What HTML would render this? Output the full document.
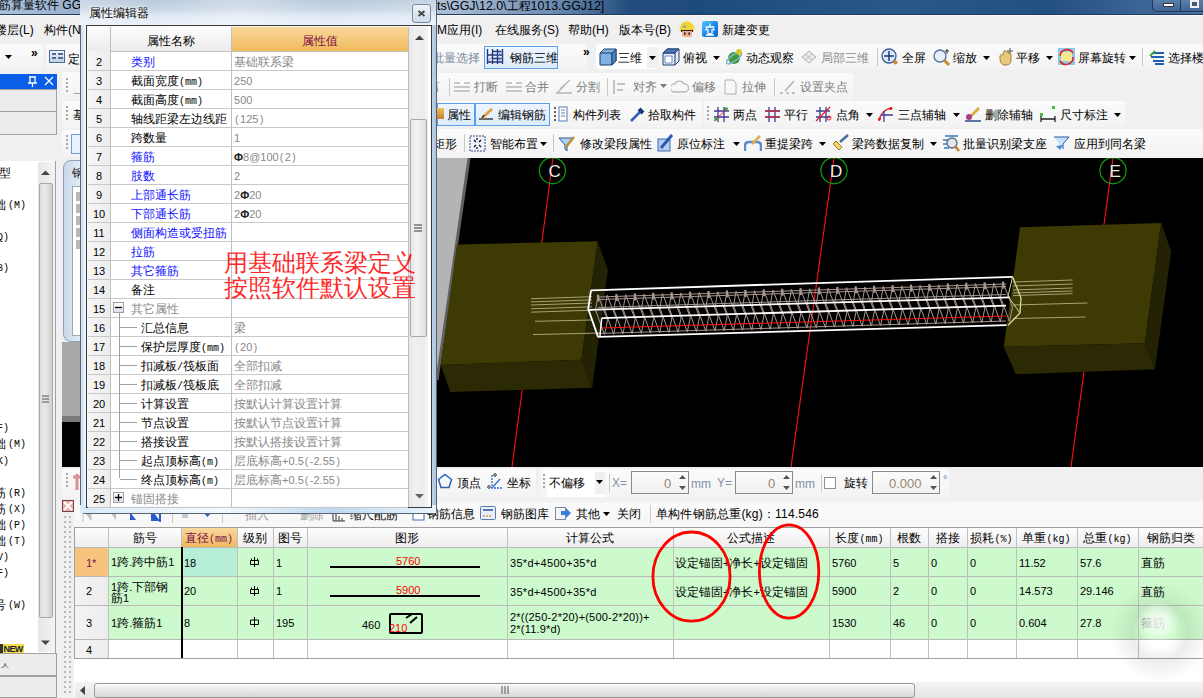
<!DOCTYPE html><html><head><meta charset="utf-8"><style>
html,body{margin:0;padding:0}
body{width:1203px;height:698px;overflow:hidden;position:relative;background:#f0f0f0;font-family:'Liberation Sans',sans-serif}
div,span,svg{position:absolute;box-sizing:border-box}
span{white-space:nowrap}
</style></head><body>
<div style="left:0px;top:0px;width:1203px;height:15px;background:linear-gradient(90deg,#aac0da 0px,#9db4d0 60px,#5d82ad 330px,#27507f 520px,#1f4a7c 700px,#2b5889 900px,#24507f 1050px,#3a6493 1140px,#4a729e 1203px)"></div>
<div style="left:430px;top:0px;width:200px;height:15px;background:linear-gradient(90deg,rgba(190,205,225,0.9),rgba(160,185,215,0.6) 60%,rgba(60,100,150,0))"></div>
<div style="left:0px;top:14px;width:1203px;height:1.5px;background:#203b5e"></div>
<span style="left:-1px;top:-1.0px;font-size:12px;line-height:12px;color:#000;font-family:'Liberation Sans',sans-serif;">筋算量软件 GG</span>
<span style="left:437px;top:0.3px;font-size:12.4px;line-height:12.4px;color:#000;font-family:'Liberation Sans',sans-serif;">ts\GGJ\12.0\工程1013.GGJ12]</span>
<div style="left:1152px;top:-3px;width:29px;height:15px;border:1px solid #223a5a;border-radius:0 0 0 4px;background:linear-gradient(#5f84ad,#3d6594)"></div>
<div style="left:1163px;top:3px;width:11px;height:4px;background:#fff;border:1px solid #334"></div>
<div style="left:1180px;top:-3px;width:30px;height:15px;border:1px solid #223a5a;background:linear-gradient(#5f84ad,#3d6594)"></div>
<div style="left:1190px;top:0px;width:9px;height:8px;border:2px solid #eee;background:#44596f"></div>
<div style="left:0px;top:15px;width:1203px;height:28px;background:#f0f0f0"></div>
<div style="left:0px;top:15px;width:1203px;height:1px;background:#fafafa"></div>
<span style="left:-5px;top:24.0px;font-size:12px;line-height:12px;color:#000;font-family:'Liberation Sans',sans-serif;">楼层(L)</span>
<span style="left:44px;top:24.0px;font-size:12px;line-height:12px;color:#000;font-family:'Liberation Sans',sans-serif;">构件(N)</span>
<span style="left:437px;top:24.0px;font-size:12px;line-height:12px;color:#000;font-family:'Liberation Sans',sans-serif;">M应用(I)</span>
<span style="left:495px;top:24.0px;font-size:12px;line-height:12px;color:#000;font-family:'Liberation Sans',sans-serif;">在线服务(S)</span>
<span style="left:568px;top:24.0px;font-size:12px;line-height:12px;color:#000;font-family:'Liberation Sans',sans-serif;">帮助(H)</span>
<span style="left:619px;top:24.0px;font-size:12px;line-height:12px;color:#000;font-family:'Liberation Sans',sans-serif;">版本号(B)</span>
<span style="left:722px;top:24.0px;font-size:12px;line-height:12px;color:#000;font-family:'Liberation Sans',sans-serif;">新建变更</span>
<svg style="left:679px;top:21px" width="16" height="16"><path d="M0.5 10Q0.5 0.5 8 0.5Q15.5 0.5 15.5 10z" fill="#f2d235"/><path d="M2 9h12v2H2z" fill="#2a1e18"/><path d="M3 10h10v3.5q0 2.5-2.5 2.5h-5q-2.5 0-2.5-2.5z" fill="#eab08e"/><rect x="5" y="11.5" width="1.6" height="2.2" fill="#222"/><rect x="9.4" y="11.5" width="1.6" height="2.2" fill="#222"/><circle cx="5.5" cy="5.5" r="1.3" fill="#5aa0e0"/></svg>
<svg style="left:702px;top:21px" width="16" height="16"><defs><linearGradient id="bg1" x1="0" y1="0" x2="1" y2="1"><stop offset="0" stop-color="#5cc8ff"/><stop offset="0.5" stop-color="#1a8ae8"/><stop offset="1" stop-color="#0a6ad0"/></linearGradient></defs><rect x="0" y="0" width="16" height="16" rx="2" fill="url(#bg1)"/><path d="M8 2.5v3M3.5 6h9M5 7.5l-1.5 2M11 7.5l1.5 2M6 8v3M10 8v3M4 14h8M5 11.5l6 2.5M11 11.5l-6 2.5" stroke="#fff" stroke-width="1.3" fill="none"/></svg>
<div style="left:0px;top:43px;width:1203px;height:114px;background:#f0f0f0"></div>
<div style="left:0px;top:44px;width:43px;height:25px;background:linear-gradient(#fbfbfb,#f3f3f3);border-radius:3px;"></div>
<svg style="left:5px;top:55px" width="7" height="4"><path d="M0 0h7L3.5 4z" fill="#000"/></svg>
<span style="left:31px;top:46.8px;font-size:12px;line-height:12px;color:#000;font-family:'Liberation Sans',sans-serif;font-weight:bold">»</span>
<div style="left:46px;top:44px;width:40px;height:25px;background:linear-gradient(#fbfbfb,#f3f3f3);border-radius:3px;"></div>
<div style="left:49px;top:50px;width:16px;height:13px;border:1px solid #4a6a9a;background:linear-gradient(#f0f4fa,#c0d0e6)"></div>
<div style="left:52px;top:53px;width:4px;height:2px;background:#4a6a9a"></div>
<div style="left:58px;top:53px;width:5px;height:2px;background:#4a6a9a"></div>
<div style="left:52px;top:57px;width:4px;height:2px;background:#4a6a9a"></div>
<div style="left:58px;top:57px;width:5px;height:2px;background:#4a6a9a"></div>
<span style="left:68px;top:52.5px;font-size:12px;line-height:12px;color:#000;font-family:'Liberation Sans',sans-serif;">定</span>
<div style="left:62px;top:72px;width:30px;height:28px;background:linear-gradient(#fbfbfb,#f3f3f3);border-radius:3px;"></div>
<div style="left:66px;top:78px;width:2px;height:2px;background:#a8a8a8"></div>
<div style="left:66px;top:82px;width:2px;height:2px;background:#a8a8a8"></div>
<div style="left:66px;top:86px;width:2px;height:2px;background:#a8a8a8"></div>
<div style="left:66px;top:90px;width:2px;height:2px;background:#a8a8a8"></div>
<div style="left:62px;top:101px;width:30px;height:27px;background:linear-gradient(#fbfbfb,#f3f3f3);border-radius:3px;"></div>
<div style="left:66px;top:106px;width:2px;height:2px;background:#a8a8a8"></div>
<div style="left:66px;top:110px;width:2px;height:2px;background:#a8a8a8"></div>
<div style="left:66px;top:114px;width:2px;height:2px;background:#a8a8a8"></div>
<div style="left:66px;top:118px;width:2px;height:2px;background:#a8a8a8"></div>
<div style="left:62px;top:130px;width:30px;height:27px;background:linear-gradient(#fbfbfb,#f3f3f3);border-radius:3px;"></div>
<div style="left:66px;top:135px;width:2px;height:2px;background:#a8a8a8"></div>
<div style="left:66px;top:139px;width:2px;height:2px;background:#a8a8a8"></div>
<div style="left:66px;top:143px;width:2px;height:2px;background:#a8a8a8"></div>
<div style="left:66px;top:147px;width:2px;height:2px;background:#a8a8a8"></div>
<span style="left:74px;top:81.1px;font-size:12px;line-height:12px;color:#999;font-family:'Liberation Sans',sans-serif;">_</span>
<span style="left:73px;top:108.5px;font-size:12px;line-height:12px;color:#000;font-family:'Liberation Sans',sans-serif;">基</span>
<div style="left:71px;top:134px;width:14px;height:20px;border:1px solid #6aa0e0;background:#e8f2fc"></div>
<div style="left:437px;top:44px;width:150px;height:25px;background:linear-gradient(#fbfbfb,#f3f3f3);border-radius:3px;"></div>
<span style="left:432px;top:52.3px;font-size:12px;line-height:12px;color:#7a8aa0;font-family:'Liberation Sans',sans-serif;">批量选择</span>
<div style="left:484px;top:46px;width:74px;height:23px;border:1px solid #5aa0e8;background:linear-gradient(#eef6fe,#dcecfc)"></div>
<svg style="left:486px;top:48px" width="19" height="17"><g stroke="#2a3a7a" stroke-width="1.4" fill="none"><path d="M1.5 1v15M6.5 1v15M11.5 1v15M16.5 1v15M1.5 7h15M1.5 14h15M6.5 3.5h10M6.5 10.5h10"/></g><path d="M2 13L6 9M12 7l4-4M12 13l4-3" stroke="#6a9ad0" stroke-width="1"/></svg>
<span style="left:510px;top:52.3px;font-size:12px;line-height:12px;color:#000;font-family:'Liberation Sans',sans-serif;">钢筋三维</span>
<span style="left:583px;top:46.1px;font-size:12px;line-height:12px;color:#000;font-family:'Liberation Sans',sans-serif;font-weight:bold">»</span>
<div style="left:596px;top:44px;width:62px;height:25px;background:linear-gradient(#fbfbfb,#f3f3f3);border-radius:3px;background:#fff"></div>
<svg style="left:599px;top:48px" width="18" height="18"><path d="M1 5l4-4h12v12l-4 4H1z" fill="#7fb2e0" stroke="#1e3f70"/><path d="M1 5h12v12M13 5l4-4" fill="none" stroke="#1e3f70"/><path d="M13 5l4-4v12l-4 4z" fill="#4a85c0" stroke="#1e3f70"/></svg>
<span style="left:618px;top:52.3px;font-size:12px;line-height:12px;color:#000;font-family:'Liberation Sans',sans-serif;">三维</span>
<div style="left:647px;top:47px;width:12px;height:21px;background:#f0f0f0"></div>
<svg style="left:649.3px;top:55.6px" width="7" height="4"><path d="M0 0h7L3.5 4z" fill="#000"/></svg>
<div style="left:658px;top:44px;width:545px;height:25px;background:linear-gradient(#fbfbfb,#f3f3f3);border-radius:3px;"></div>
<svg style="left:662px;top:48px" width="18" height="18"><path d="M1 5l4-4h12v12l-4 4H1z" fill="#e0ecf8" stroke="#1e3f70"/><path d="M1 5h12v12M13 5l4-4" fill="none" stroke="#1e3f70"/><path d="M5 1h12l-4 4H1z" fill="#4a78b0" stroke="#1e3f70"/><path d="M3 8h7v7H3z" fill="#fff" stroke="#7090c0"/></svg>
<span style="left:683px;top:52.3px;font-size:12px;line-height:12px;color:#000;font-family:'Liberation Sans',sans-serif;">俯视</span>
<svg style="left:713.2px;top:55.6px" width="7" height="4"><path d="M0 0h7L3.5 4z" fill="#000"/></svg>
<svg style="left:726px;top:48px" width="18" height="18"><ellipse cx="8" cy="10" rx="6" ry="6" fill="#3a9a3a"/><ellipse cx="8" cy="10" rx="9" ry="3" transform="rotate(-35 8 10)" fill="none" stroke="#8ab0d8" stroke-width="1.5"/><circle cx="13" cy="4" r="3" fill="#d8c830"/></svg>
<span style="left:746px;top:52.3px;font-size:12px;line-height:12px;color:#000;font-family:'Liberation Sans',sans-serif;">动态观察</span>
<svg style="left:800px;top:49px" width="18" height="16"><path d="M2 8l7-6 7 6-7 6z" fill="#e8e8e8" stroke="#b0b0b0"/><path d="M5 5l7 6M12 5l-7 6" stroke="#c0c0c0"/></svg>
<span style="left:821px;top:52.3px;font-size:12px;line-height:12px;color:#8a8a8a;font-family:'Liberation Sans',sans-serif;">局部三维</span>
<div style="left:877px;top:48px;width:1px;height:18px;background:#c8c8c8"></div>
<svg style="left:881px;top:48px" width="18" height="18"><circle cx="8" cy="8" r="7" fill="#dfe8f5" stroke="#3a5a90" stroke-width="1.3"/><path d="M8 3v10M3 8h10" stroke="#1a3a80" stroke-width="1.5"/><circle cx="14.5" cy="14.5" r="2" fill="#e08020"/></svg>
<span style="left:902px;top:52.3px;font-size:12px;line-height:12px;color:#000;font-family:'Liberation Sans',sans-serif;">全屏</span>
<svg style="left:933px;top:48px" width="18" height="18"><circle cx="7" cy="8" r="6" fill="#e6eef8" stroke="#5070a0" stroke-width="1.3"/><path d="M11 12l5 5" stroke="#c09030" stroke-width="3"/><path d="M14 1v5M12 3h4" stroke="#333"/></svg>
<span style="left:953px;top:52.3px;font-size:12px;line-height:12px;color:#000;font-family:'Liberation Sans',sans-serif;">缩放</span>
<svg style="left:983.3px;top:55.6px" width="7" height="4"><path d="M0 0h7L3.5 4z" fill="#000"/></svg>
<svg style="left:997px;top:48px" width="18" height="18"><path d="M3 9c0-3 2-3 3-2l1-4c1-1 2 0 2 1l1 0c1-1 2 0 2 1v1c1-1 2 0 2 1l0 6c0 2-2 4-5 4H7c-2 0-4-3-4-6z" fill="#e8c878" stroke="#a08040"/><path d="M13 0v6M10 3h6" stroke="#555"/></svg>
<span style="left:1016px;top:52.3px;font-size:12px;line-height:12px;color:#000;font-family:'Liberation Sans',sans-serif;">平移</span>
<svg style="left:1046.3px;top:55.6px" width="7" height="4"><path d="M0 0h7L3.5 4z" fill="#000"/></svg>
<svg style="left:1058px;top:48px" width="18" height="18"><rect x="0" y="0" width="17" height="17" fill="#8cc8e8"/><rect x="3" y="4" width="11" height="9" fill="#f8e890"/><path d="M2 8a7 7 0 0 1 13-3M15 9a7 7 0 0 1-13 4" fill="none" stroke="#e02020" stroke-width="1.5"/></svg>
<span style="left:1078px;top:52.3px;font-size:12px;line-height:12px;color:#000;font-family:'Liberation Sans',sans-serif;">屏幕旋转</span>
<svg style="left:1129.3px;top:55.6px" width="7" height="4"><path d="M0 0h7L3.5 4z" fill="#000"/></svg>
<div style="left:1142px;top:48px;width:1px;height:18px;background:#c8c8c8"></div>
<svg style="left:1149px;top:50px" width="16" height="15"><path d="M4 3h11M2 7h13M4 11h11M6 14h9" stroke="#2060b0" stroke-width="2"/><path d="M1 6l5-5" stroke="#40a040" stroke-width="2"/></svg>
<span style="left:1168px;top:52.3px;font-size:12px;line-height:12px;color:#000;font-family:'Liberation Sans',sans-serif;">选择楼</span>
<div style="left:437px;top:73px;width:416px;height:27px;background:linear-gradient(#fbfbfb,#f3f3f3);border-radius:3px;"></div>
<span style="left:428px;top:81.2px;font-size:12px;line-height:12px;color:#8a8a8a;font-family:'Liberation Sans',sans-serif;">菑</span>
<div style="left:449px;top:78px;width:1px;height:18px;background:#c8c8c8"></div>
<svg style="left:453px;top:80px" width="18" height="14"><path d="M1 3h6M11 3h6M1 7h16M1 11h16" stroke="#b8b8b8" stroke-width="1.3"/></svg>
<span style="left:474px;top:81.2px;font-size:12px;line-height:12px;color:#7a7a7a;font-family:'Liberation Sans',sans-serif;">打断</span>
<svg style="left:505px;top:80px" width="18" height="14"><path d="M1 3h6M11 3h6M1 7h16M1 11h16" stroke="#b8b8b8" stroke-width="1.3"/></svg>
<span style="left:525px;top:81.2px;font-size:12px;line-height:12px;color:#7a7a7a;font-family:'Liberation Sans',sans-serif;">合并</span>
<svg style="left:555px;top:79px" width="18" height="16"><path d="M1 14h16M2 14l8-8M5 10l10-9" stroke="#b8b8b8" stroke-width="1.5"/></svg>
<span style="left:576px;top:81.2px;font-size:12px;line-height:12px;color:#7a7a7a;font-family:'Liberation Sans',sans-serif;">分割</span>
<div style="left:607px;top:78px;width:1px;height:18px;background:#c8c8c8"></div>
<svg style="left:612px;top:79px" width="14" height="16"><path d="M2 1v14M5 5h8M5 11h6" stroke="#b0b0b0" stroke-width="1.5"/></svg>
<span style="left:633px;top:81.2px;font-size:12px;line-height:12px;color:#7a7a7a;font-family:'Liberation Sans',sans-serif;">对齐</span>
<svg style="left:659.5px;top:84.4px" width="7" height="4"><path d="M0 0h7L3.5 4z" fill="#7a7a7a"/></svg>
<svg style="left:671px;top:79px" width="18" height="16"><path d="M3 13a4 4 0 0 1 1-8a5 5 0 0 1 9 0a4 4 0 0 1 1 8z" fill="none" stroke="#b8b8b8" stroke-width="1.3"/></svg>
<span style="left:692px;top:81.2px;font-size:12px;line-height:12px;color:#7a7a7a;font-family:'Liberation Sans',sans-serif;">偏移</span>
<svg style="left:723px;top:79px" width="15" height="16"><path d="M2 1h8l3 3v11H2z" fill="#f8f8f8" stroke="#b0b0b0"/></svg>
<span style="left:742px;top:81.2px;font-size:12px;line-height:12px;color:#7a7a7a;font-family:'Liberation Sans',sans-serif;">拉伸</span>
<div style="left:774px;top:78px;width:1px;height:18px;background:#c8c8c8"></div>
<svg style="left:779px;top:79px" width="17" height="16"><path d="M1 14h3M7 14h3M13 14h3M6 12l9-10" stroke="#b0b0b0" stroke-width="1.5"/></svg>
<span style="left:800px;top:81.2px;font-size:12px;line-height:12px;color:#7a7a7a;font-family:'Liberation Sans',sans-serif;">设置夹点</span>
<div style="left:437px;top:101px;width:265px;height:26px;background:linear-gradient(#fbfbfb,#f3f3f3);border-radius:3px;"></div>
<div style="left:437px;top:103px;width:38px;height:23px;border:1px solid #5aa0e8;background:linear-gradient(#eef6fe,#dcecfc)"></div>
<div style="left:437px;top:108px;width:7px;height:11px;background:linear-gradient(#f0c060,#c08030)"></div>
<span style="left:447px;top:109.0px;font-size:12px;line-height:12px;color:#000;font-family:'Liberation Sans',sans-serif;">属性</span>
<div style="left:475px;top:103px;width:75px;height:23px;border:1px solid #5aa0e8;background:linear-gradient(#eef6fe,#dcecfc)"></div>
<svg style="left:478px;top:106px" width="18" height="16"><path d="M1 13h14" stroke="#222" stroke-width="1.3"/><path d="M4 12l10-9" stroke="#e0a040" stroke-width="3"/><path d="M4 12l2-3" stroke="#222" stroke-width="1.3"/></svg>
<span style="left:498px;top:109.0px;font-size:12px;line-height:12px;color:#000;font-family:'Liberation Sans',sans-serif;">编辑钢筋</span>
<svg style="left:553px;top:106px" width="15" height="16"><path d="M1 2h2M1 6h2M1 10h2M1 14h2" stroke="#333" stroke-width="1.5"/><rect x="6" y="1" width="8" height="14" fill="#fff" stroke="#5a7ab0"/><path d="M8 4h4M8 7h4M8 10h4" stroke="#5a7ab0"/></svg>
<span style="left:573px;top:109.0px;font-size:12px;line-height:12px;color:#000;font-family:'Liberation Sans',sans-serif;">构件列表</span>
<svg style="left:629px;top:105px" width="17" height="18"><path d="M2 16l9-9" stroke="#3060b0" stroke-width="2.5"/><path d="M10 4l4 4" stroke="#1a3a80" stroke-width="4"/></svg>
<span style="left:648px;top:109.0px;font-size:12px;line-height:12px;color:#000;font-family:'Liberation Sans',sans-serif;">拾取构件</span>
<div style="left:704px;top:101px;width:421px;height:26px;background:linear-gradient(#fbfbfb,#f3f3f3);border-radius:3px;"></div>
<div style="left:707px;top:106px;width:2px;height:2px;background:#a8a8a8"></div>
<div style="left:707px;top:110px;width:2px;height:2px;background:#a8a8a8"></div>
<div style="left:707px;top:114px;width:2px;height:2px;background:#a8a8a8"></div>
<div style="left:707px;top:118px;width:2px;height:2px;background:#a8a8a8"></div>
<svg style="left:713px;top:106px" width="16" height="16"><path d="M1 5h15M1 11h15M5 1v15M11 1v15" stroke="#3a3a9a" stroke-width="1.3"/><path d="M1 15L15 2" stroke="#e02020"/><circle cx="3" cy="13" r="1.8" fill="#40a040"/><circle cx="13" cy="3" r="1.8" fill="#40a040"/></svg>
<span style="left:733px;top:109.0px;font-size:12px;line-height:12px;color:#000;font-family:'Liberation Sans',sans-serif;">两点</span>
<svg style="left:764px;top:106px" width="16" height="16"><path d="M1 5h15M1 11h15M5 1v15M11 1v15" stroke="#3a3a9a" stroke-width="1.3"/><path d="M1 5h15M1 11h15" stroke="#c03040" stroke-width="1.3"/></svg>
<span style="left:784px;top:109.0px;font-size:12px;line-height:12px;color:#000;font-family:'Liberation Sans',sans-serif;">平行</span>
<svg style="left:815px;top:106px" width="17" height="16"><path d="M1 5h14M1 11h14M5 1v15M11 1v15" stroke="#3a3a9a" stroke-width="1.3"/><path d="M1 15L15 1" stroke="#e02020" stroke-width="1.2"/><circle cx="14" cy="12" r="2" fill="none" stroke="#e02020"/></svg>
<span style="left:836px;top:109.0px;font-size:12px;line-height:12px;color:#000;font-family:'Liberation Sans',sans-serif;">点角</span>
<svg style="left:866.0px;top:112.8px" width="7" height="4"><path d="M0 0h7L3.5 4z" fill="#000"/></svg>
<svg style="left:877px;top:106px" width="17" height="16"><path d="M2 15C3 8 8 3 15 2" stroke="#e02020" fill="none" stroke-width="1.3"/><path d="M7 5v11M4 9h12" stroke="#3a3a9a" stroke-width="1.3"/><circle cx="2.5" cy="13" r="1.5" fill="#e02020"/><circle cx="14" cy="2.5" r="1.5" fill="#e02020"/></svg>
<span style="left:898px;top:109.0px;font-size:12px;line-height:12px;color:#000;font-family:'Liberation Sans',sans-serif;">三点辅轴</span>
<svg style="left:952.5px;top:112.8px" width="7" height="4"><path d="M0 0h7L3.5 4z" fill="#000"/></svg>
<svg style="left:964px;top:105px" width="18" height="18"><path d="M1 16h16" stroke="#2a4a8a" stroke-width="1.5"/><path d="M5 13l10-10" stroke="#d8b040" stroke-width="3"/><circle cx="5" cy="12" r="3" fill="#a04080"/></svg>
<span style="left:985px;top:109.0px;font-size:12px;line-height:12px;color:#000;font-family:'Liberation Sans',sans-serif;">删除辅轴</span>
<svg style="left:1040px;top:106px" width="16" height="16"><path d="M1 13h14M1 10v6M15 10v6" stroke="#222" stroke-width="1.3"/><rect x="0" y="7" width="3" height="3" fill="#40c040"/><rect x="12" y="0" width="3" height="3" fill="#40c040"/></svg>
<span style="left:1060px;top:109.0px;font-size:12px;line-height:12px;color:#000;font-family:'Liberation Sans',sans-serif;">尺寸标注</span>
<svg style="left:1113.8px;top:112.8px" width="7" height="4"><path d="M0 0h7L3.5 4z" fill="#000"/></svg>
<div style="left:437px;top:129px;width:766px;height:28px;background:linear-gradient(#fbfbfb,#f3f3f3);border-radius:3px;"></div>
<span style="left:433px;top:138.3px;font-size:12px;line-height:12px;color:#000;font-family:'Liberation Sans',sans-serif;">矩形</span>
<div style="left:464px;top:134px;width:1px;height:18px;background:#c8c8c8"></div>
<svg style="left:469px;top:135px" width="17" height="17"><rect x="1" y="1" width="15" height="15" fill="#f0f4fa" stroke="#304a80" stroke-dasharray="2 1"/><path d="M5 5l2 2M12 5l-2 2M5 12l2-2M12 12l-2-2M8 3v2M8 12v2" stroke="#111" stroke-width="1.3"/></svg>
<span style="left:490px;top:138.3px;font-size:12px;line-height:12px;color:#000;font-family:'Liberation Sans',sans-serif;">智能布置</span>
<svg style="left:540.0px;top:141.8px" width="7" height="4"><path d="M0 0h7L3.5 4z" fill="#000"/></svg>
<div style="left:553px;top:134px;width:1px;height:18px;background:#c8c8c8"></div>
<svg style="left:558px;top:135px" width="18" height="18"><path d="M1 3h14l-6 7v6l-2-2v-4z" fill="#a8d0f0" stroke="#2a5aa0"/><path d="M8 12l8-10" stroke="#c09030" stroke-width="2.5"/></svg>
<span style="left:580px;top:138.3px;font-size:12px;line-height:12px;color:#000;font-family:'Liberation Sans',sans-serif;">修改梁段属性</span>
<svg style="left:657px;top:134px" width="17" height="18"><rect x="1" y="5" width="12" height="12" fill="#b8d0f0" stroke="#3a6ab0"/><path d="M4 14l11-13" stroke="#2a5ab0" stroke-width="3"/></svg>
<span style="left:677px;top:138.3px;font-size:12px;line-height:12px;color:#000;font-family:'Liberation Sans',sans-serif;">原位标注</span>
<svg style="left:732.7px;top:141.8px" width="7" height="4"><path d="M0 0h7L3.5 4z" fill="#000"/></svg>
<svg style="left:744px;top:135px" width="18" height="17"><path d="M1 16v-5c0-3 2-4 4-4h8c2 0 4 1 4 4v5" fill="none" stroke="#5a8ad0" stroke-width="2.5"/><path d="M8 9l8-8" stroke="#d8b050" stroke-width="2.5"/></svg>
<span style="left:765px;top:138.3px;font-size:12px;line-height:12px;color:#000;font-family:'Liberation Sans',sans-serif;">重提梁跨</span>
<svg style="left:819.3px;top:141.8px" width="7" height="4"><path d="M0 0h7L3.5 4z" fill="#000"/></svg>
<svg style="left:831px;top:134px" width="18" height="18"><path d="M2 10l6 6 3-3-6-6z" fill="#f0d070" stroke="#a08020"/><path d="M9 8l8-7" stroke="#4a6aa0" stroke-width="2.5"/></svg>
<span style="left:852px;top:138.3px;font-size:12px;line-height:12px;color:#000;font-family:'Liberation Sans',sans-serif;">梁跨数据复制</span>
<svg style="left:930.3px;top:141.8px" width="7" height="4"><path d="M0 0h7L3.5 4z" fill="#000"/></svg>
<svg style="left:942px;top:134px" width="18" height="18"><path d="M3 2h13M1 6h6M1 10h5M2 14h5" stroke="#3a7ac0" stroke-width="1.5"/><circle cx="10" cy="9" r="5" fill="#e0e8f0" stroke="#5a6a80" stroke-width="1.3"/><path d="M13 12l4 5" stroke="#c08030" stroke-width="2.5"/></svg>
<span style="left:963px;top:138.3px;font-size:12px;line-height:12px;color:#000;font-family:'Liberation Sans',sans-serif;">批量识别梁支座</span>
<svg style="left:1053px;top:134px" width="18" height="18"><path d="M1 3h15l-6 7v5" fill="#c8e0f8" stroke="#2a5aa0"/><path d="M3 12l4 4 3-5" fill="#4a8ad0"/></svg>
<span style="left:1074px;top:138.3px;font-size:12px;line-height:12px;color:#000;font-family:'Liberation Sans',sans-serif;">应用到同名梁</span>
<div style="left:0px;top:74px;width:58px;height:15px;background:#0a5ee8"></div>
<svg style="left:26px;top:75px" width="30" height="13"><path d="M3 2h7M4 2v6M9 2v6M2 8h9M6.5 8v4" stroke="#fff" stroke-width="1.3" fill="none"/><path d="M19 2l8 8M27 2l-8 8" stroke="#fff" stroke-width="1.2"/></svg>
<div style="left:0px;top:89px;width:57px;height:23px;background:#ececec;border:1px solid #a0a0a0;border-left:none"></div>
<div style="left:0px;top:111px;width:57px;height:24px;background:#ececec;border:1px solid #a0a0a0;border-left:none"></div>
<div style="left:0px;top:135px;width:57px;height:26px;background:#f0f0f0"></div>
<div style="left:0px;top:161px;width:56px;height:492px;background:#fff;border-right:1px solid #a0a0a0"></div>
<div style="left:38px;top:162px;width:17px;height:490px;background:linear-gradient(90deg,#e6e6e6,#f4f4f4)"></div>
<div style="left:39px;top:183px;width:14px;height:435px;background:linear-gradient(90deg,#dcdcdc,#eaeaea 40%,#d0d0d0);border:1px solid #a8a8a8;border-radius:2px"></div>
<svg style="left:41px;top:170px" width="9" height="6"><path d="M0 5L4.5 0.5L9 5z" fill="#444"/></svg>
<svg style="left:41px;top:640px" width="9" height="6"><path d="M0 0.5L4.5 5L9 0.5z" fill="#444"/></svg>
<svg style="left:41px;top:395px" width="9" height="8"><path d="M1 1h7M1 4h7M1 7h7" stroke="#555"/></svg>
<span style="left:-1px;top:166.5px;font-size:12px;line-height:12px;color:#000;font-family:'Liberation Sans',sans-serif;">型</span>
<span style="left:-6px;top:198.8px;font-size:12px;line-height:12px;color:#000;font-family:'Liberation Sans',sans-serif;">础</span>
<span style="left:8px;top:201.3px;font-size:10px;line-height:10px;color:#000;font-family:'Liberation Mono',monospace;">(M)</span>
<span style="left:-3px;top:232.6px;font-size:10px;line-height:10px;color:#000;font-family:'Liberation Mono',monospace;">Q)</span>
<span style="left:-3px;top:264.4px;font-size:10px;line-height:10px;color:#000;font-family:'Liberation Mono',monospace;">B)</span>
<span style="left:-3px;top:424.0px;font-size:10px;line-height:10px;color:#000;font-family:'Liberation Mono',monospace;">F)</span>
<span style="left:-6px;top:437.5px;font-size:12px;line-height:12px;color:#000;font-family:'Liberation Sans',sans-serif;">础</span>
<span style="left:8px;top:440.0px;font-size:10px;line-height:10px;color:#000;font-family:'Liberation Mono',monospace;">(M)</span>
<span style="left:-3px;top:457.0px;font-size:10px;line-height:10px;color:#000;font-family:'Liberation Mono',monospace;">K)</span>
<span style="left:-6px;top:486.5px;font-size:12px;line-height:12px;color:#000;font-family:'Liberation Sans',sans-serif;">筋</span>
<span style="left:8px;top:489.0px;font-size:10px;line-height:10px;color:#000;font-family:'Liberation Mono',monospace;">(R)</span>
<span style="left:-6px;top:502.5px;font-size:12px;line-height:12px;color:#000;font-family:'Liberation Sans',sans-serif;">筋</span>
<span style="left:8px;top:505.0px;font-size:10px;line-height:10px;color:#000;font-family:'Liberation Mono',monospace;">(X)</span>
<span style="left:-6px;top:518.5px;font-size:12px;line-height:12px;color:#000;font-family:'Liberation Sans',sans-serif;">础</span>
<span style="left:8px;top:521.0px;font-size:10px;line-height:10px;color:#000;font-family:'Liberation Mono',monospace;">(P)</span>
<span style="left:-6px;top:534.5px;font-size:12px;line-height:12px;color:#000;font-family:'Liberation Sans',sans-serif;">础</span>
<span style="left:8px;top:537.0px;font-size:10px;line-height:10px;color:#000;font-family:'Liberation Mono',monospace;">(T)</span>
<span style="left:-3px;top:553.0px;font-size:10px;line-height:10px;color:#000;font-family:'Liberation Mono',monospace;">V)</span>
<span style="left:-3px;top:569.0px;font-size:10px;line-height:10px;color:#000;font-family:'Liberation Mono',monospace;">F)</span>
<span style="left:-6px;top:598.5px;font-size:12px;line-height:12px;color:#000;font-family:'Liberation Sans',sans-serif;">号</span>
<span style="left:8px;top:601.0px;font-size:10px;line-height:10px;color:#000;font-family:'Liberation Mono',monospace;">(W)</span>
<div style="left:0px;top:644px;width:3px;height:9px;background:#333"></div>
<div style="left:3px;top:644px;width:21px;height:9px;background:#f2dc40"></div>
<span style="left:3.5px;top:644.8px;font-size:9px;line-height:9px;color:#1a1a40;font-family:'Liberation Sans',sans-serif;font-weight:bold;letter-spacing:-0.6px">NEW</span>
<div style="left:0px;top:653px;width:57px;height:23px;background:#ececec;border:1px solid #a0a0a0;border-left:none"></div>
<span style="left:0px;top:661.4px;font-size:10px;line-height:10px;color:#333;font-family:'Liberation Sans',sans-serif;">ㅅ</span>
<div style="left:0px;top:676px;width:57px;height:22px;background:#ececec;border:1px solid #a0a0a0;border-left:none"></div>
<div style="left:57px;top:70px;width:5px;height:628px;background:#f0f0f0"></div>
<div style="left:62px;top:158px;width:20px;height:312px;background:#f0f0f0"></div>
<div style="left:63px;top:160px;width:22px;height:182px;background:linear-gradient(90deg,#c8d8ea,#e8f0f8);border:1px solid #8aa0bc;border-radius:8px 0 0 8px"></div>
<span style="left:72px;top:166.5px;font-size:12px;line-height:12px;color:#222;font-family:'Liberation Sans',sans-serif;">钢</span>
<div style="left:72px;top:186px;width:14px;height:150px;background:#fff;border:1px solid #9aa"></div>
<div style="left:76px;top:192px;width:5px;height:9px;background:#b8b8b8"></div>
<div style="left:76px;top:204px;width:5px;height:9px;background:#b8b8b8"></div>
<div style="left:76px;top:216px;width:5px;height:9px;background:#b8b8b8"></div>
<div style="left:76px;top:228px;width:5px;height:9px;background:#b8b8b8"></div>
<div style="left:76px;top:240px;width:5px;height:9px;background:#b8b8b8"></div>
<div style="left:62px;top:342px;width:20px;height:80px;background:#a8a8a8"></div>
<div style="left:62px;top:416px;width:20px;height:6px;background:#7a7a7a"></div>
<div style="left:62px;top:422px;width:20px;height:45px;background:#000"></div>
<div style="left:62px;top:469px;width:20px;height:30px;background:linear-gradient(#fbfbfb,#f3f3f3);border-radius:3px;"></div>
<div style="left:66px;top:473px;width:2px;height:2px;background:#a8a8a8"></div>
<div style="left:66px;top:477px;width:2px;height:2px;background:#a8a8a8"></div>
<div style="left:66px;top:481px;width:2px;height:2px;background:#a8a8a8"></div>
<div style="left:66px;top:485px;width:2px;height:2px;background:#a8a8a8"></div>
<svg style="left:72px;top:473px" width="10" height="17"><path d="M5 1v16M1 4h8" stroke="#d89090" stroke-width="3"/></svg>
<svg style="left:62px;top:500px" width="12" height="12"><rect x="0.5" y="0.5" width="11" height="11" fill="#f0b0a0" stroke="#704050"/><path d="M2 2l8 8M10 2l-8 8" stroke="#fff" stroke-width="2"/></svg>
<div style="left:64px;top:516px;width:2px;height:2px;background:#b8b8b8"></div>
<div style="left:69px;top:516px;width:2px;height:2px;background:#b8b8b8"></div>
<div style="left:64px;top:521px;width:2px;height:2px;background:#b8b8b8"></div>
<div style="left:69px;top:521px;width:2px;height:2px;background:#b8b8b8"></div>
<div style="left:64px;top:526px;width:2px;height:2px;background:#b8b8b8"></div>
<div style="left:69px;top:526px;width:2px;height:2px;background:#b8b8b8"></div>
<div style="left:64px;top:531px;width:2px;height:2px;background:#b8b8b8"></div>
<div style="left:69px;top:531px;width:2px;height:2px;background:#b8b8b8"></div>
<div style="left:64px;top:536px;width:2px;height:2px;background:#b8b8b8"></div>
<div style="left:69px;top:536px;width:2px;height:2px;background:#b8b8b8"></div>
<div style="left:64px;top:541px;width:2px;height:2px;background:#b8b8b8"></div>
<div style="left:69px;top:541px;width:2px;height:2px;background:#b8b8b8"></div>
<div style="left:64px;top:546px;width:2px;height:2px;background:#b8b8b8"></div>
<div style="left:69px;top:546px;width:2px;height:2px;background:#b8b8b8"></div>
<div style="left:64px;top:551px;width:2px;height:2px;background:#b8b8b8"></div>
<div style="left:69px;top:551px;width:2px;height:2px;background:#b8b8b8"></div>
<div style="left:64px;top:556px;width:2px;height:2px;background:#b8b8b8"></div>
<div style="left:69px;top:556px;width:2px;height:2px;background:#b8b8b8"></div>
<div style="left:64px;top:561px;width:2px;height:2px;background:#b8b8b8"></div>
<div style="left:69px;top:561px;width:2px;height:2px;background:#b8b8b8"></div>
<div style="left:64px;top:566px;width:2px;height:2px;background:#b8b8b8"></div>
<div style="left:69px;top:566px;width:2px;height:2px;background:#b8b8b8"></div>
<div style="left:64px;top:571px;width:2px;height:2px;background:#b8b8b8"></div>
<div style="left:69px;top:571px;width:2px;height:2px;background:#b8b8b8"></div>
<div style="left:64px;top:576px;width:2px;height:2px;background:#b8b8b8"></div>
<div style="left:69px;top:576px;width:2px;height:2px;background:#b8b8b8"></div>
<div style="left:64px;top:581px;width:2px;height:2px;background:#b8b8b8"></div>
<div style="left:69px;top:581px;width:2px;height:2px;background:#b8b8b8"></div>
<div style="left:64px;top:586px;width:2px;height:2px;background:#b8b8b8"></div>
<div style="left:69px;top:586px;width:2px;height:2px;background:#b8b8b8"></div>
<div style="left:64px;top:591px;width:2px;height:2px;background:#b8b8b8"></div>
<div style="left:69px;top:591px;width:2px;height:2px;background:#b8b8b8"></div>
<div style="left:64px;top:596px;width:2px;height:2px;background:#b8b8b8"></div>
<div style="left:69px;top:596px;width:2px;height:2px;background:#b8b8b8"></div>
<div style="left:64px;top:601px;width:2px;height:2px;background:#b8b8b8"></div>
<div style="left:69px;top:601px;width:2px;height:2px;background:#b8b8b8"></div>
<div style="left:64px;top:606px;width:2px;height:2px;background:#b8b8b8"></div>
<div style="left:69px;top:606px;width:2px;height:2px;background:#b8b8b8"></div>
<div style="left:64px;top:611px;width:2px;height:2px;background:#b8b8b8"></div>
<div style="left:69px;top:611px;width:2px;height:2px;background:#b8b8b8"></div>
<div style="left:64px;top:616px;width:2px;height:2px;background:#b8b8b8"></div>
<div style="left:69px;top:616px;width:2px;height:2px;background:#b8b8b8"></div>
<div style="left:64px;top:621px;width:2px;height:2px;background:#b8b8b8"></div>
<div style="left:69px;top:621px;width:2px;height:2px;background:#b8b8b8"></div>
<div style="left:64px;top:626px;width:2px;height:2px;background:#b8b8b8"></div>
<div style="left:69px;top:626px;width:2px;height:2px;background:#b8b8b8"></div>
<div style="left:64px;top:631px;width:2px;height:2px;background:#b8b8b8"></div>
<div style="left:69px;top:631px;width:2px;height:2px;background:#b8b8b8"></div>
<div style="left:64px;top:636px;width:2px;height:2px;background:#b8b8b8"></div>
<div style="left:69px;top:636px;width:2px;height:2px;background:#b8b8b8"></div>
<div style="left:64px;top:641px;width:2px;height:2px;background:#b8b8b8"></div>
<div style="left:69px;top:641px;width:2px;height:2px;background:#b8b8b8"></div>
<div style="left:64px;top:646px;width:2px;height:2px;background:#b8b8b8"></div>
<div style="left:69px;top:646px;width:2px;height:2px;background:#b8b8b8"></div>
<div style="left:64px;top:651px;width:2px;height:2px;background:#b8b8b8"></div>
<div style="left:69px;top:651px;width:2px;height:2px;background:#b8b8b8"></div>
<div style="left:64px;top:656px;width:2px;height:2px;background:#b8b8b8"></div>
<div style="left:69px;top:656px;width:2px;height:2px;background:#b8b8b8"></div>
<div style="left:64px;top:661px;width:2px;height:2px;background:#b8b8b8"></div>
<div style="left:69px;top:661px;width:2px;height:2px;background:#b8b8b8"></div>
<div style="left:64px;top:666px;width:2px;height:2px;background:#b8b8b8"></div>
<div style="left:69px;top:666px;width:2px;height:2px;background:#b8b8b8"></div>
<div style="left:64px;top:671px;width:2px;height:2px;background:#b8b8b8"></div>
<div style="left:69px;top:671px;width:2px;height:2px;background:#b8b8b8"></div>
<div style="left:64px;top:676px;width:2px;height:2px;background:#b8b8b8"></div>
<div style="left:69px;top:676px;width:2px;height:2px;background:#b8b8b8"></div>
<div style="left:64px;top:681px;width:2px;height:2px;background:#b8b8b8"></div>
<div style="left:69px;top:681px;width:2px;height:2px;background:#b8b8b8"></div>
<div style="left:64px;top:686px;width:2px;height:2px;background:#b8b8b8"></div>
<div style="left:69px;top:686px;width:2px;height:2px;background:#b8b8b8"></div>
<div style="left:64px;top:691px;width:2px;height:2px;background:#b8b8b8"></div>
<div style="left:69px;top:691px;width:2px;height:2px;background:#b8b8b8"></div>
<svg style="left:437px;top:158px" width="766" height="309"><rect width="766" height="309" fill="#000"/><polygon points="0.0,0.0 32.0,0.0 0.0,222.0" fill="#b4b4b4"/><line x1="32" y1="0" x2="0" y2="222" stroke="#606060" stroke-width="3"/><line x1="116" y1="0" x2="75" y2="309" stroke="#ff1010" stroke-width="1.1"/><line x1="397" y1="0" x2="354" y2="309" stroke="#ff1010" stroke-width="1.1"/><line x1="676" y1="0" x2="634" y2="309" stroke="#ff1010" stroke-width="1.1"/><polygon points="19.9,86.5 160.6,83.2 144.4,201.7 3.7,207.0" fill="#3d3a04"/><polygon points="160.6,83.2 170.9,111.7 155.2,229.7 144.4,201.7" fill="#242204"/><polygon points="3.7,207.0 144.4,201.7 155.2,229.7 13.4,234.0" fill="#2c2a04"/><polygon points="583.1,69.2 724.2,64.9 707.8,185.3 566.8,188.8" fill="#3d3a04"/><polygon points="724.2,64.9 734.2,93.6 717.9,211.2 707.8,185.3" fill="#242204"/><polygon points="566.8,188.8 707.8,185.3 717.9,211.2 578.8,216.3" fill="#2c2a04"/><polygon points="128.6,12.6 127.6,17.7 124.7,21.9 120.5,24.8 115.4,25.8 110.3,24.8 106.1,21.9 103.2,17.7 102.2,12.6 103.2,7.5 106.1,3.3 110.3,0.4 115.4,-0.6 120.5,0.4 124.7,3.3 127.6,7.5" fill="none" stroke="#10a010" stroke-width="1.2"/><text x="117.59999999999998" y="18.999999999999993" fill="#e8e8e8" font-family="Liberation Sans" font-size="17" text-anchor="middle">C</text><polygon points="410.2,12.6 409.2,17.7 406.3,21.9 402.1,24.8 397.0,25.8 391.9,24.8 387.7,21.9 384.8,17.7 383.8,12.6 384.8,7.5 387.7,3.3 391.9,0.4 397.0,-0.6 402.1,0.4 406.3,3.3 409.2,7.5" fill="none" stroke="#10a010" stroke-width="1.2"/><text x="399.2" y="18.999999999999993" fill="#e8e8e8" font-family="Liberation Sans" font-size="17" text-anchor="middle">D</text><polygon points="689.2,12.6 688.2,17.7 685.3,21.9 681.1,24.8 676.0,25.8 670.9,24.8 666.7,21.9 663.8,17.7 662.8,12.6 663.8,7.5 666.7,3.3 670.9,0.4 676.0,-0.6 681.1,0.4 685.3,3.3 688.2,7.5" fill="none" stroke="#10a010" stroke-width="1.2"/><text x="678.2" y="18.999999999999993" fill="#e8e8e8" font-family="Liberation Sans" font-size="17" text-anchor="middle">E</text><line x1="94" y1="140.7" x2="155" y2="138.7" stroke="#a8a278" stroke-width="1"/><line x1="94" y1="143.89999999999998" x2="155" y2="141.89999999999998" stroke="#a8a278" stroke-width="1"/><line x1="94" y1="147" x2="155" y2="145" stroke="#a8a278" stroke-width="1"/><line x1="94" y1="150.8" x2="155" y2="148.8" stroke="#a8a278" stroke-width="1"/><line x1="94" y1="154.2" x2="155" y2="152.2" stroke="#a8a278" stroke-width="1"/><line x1="98" y1="163.3" x2="155" y2="162" stroke="#a8a278" stroke-width="1"/><line x1="96" y1="176.60000000000002" x2="163" y2="175" stroke="#a8a278" stroke-width="1"/><line x1="576" y1="124" x2="635.5999999999999" y2="122" stroke="#a8a278" stroke-width="1"/><line x1="576" y1="128" x2="635.5999999999999" y2="126" stroke="#a8a278" stroke-width="1"/><line x1="576" y1="132" x2="635.5999999999999" y2="130" stroke="#a8a278" stroke-width="1"/><line x1="576" y1="135" x2="635.5999999999999" y2="133" stroke="#a8a278" stroke-width="1"/><line x1="576" y1="137.60000000000002" x2="635.5999999999999" y2="135.60000000000002" stroke="#a8a278" stroke-width="1"/><line x1="576" y1="147" x2="650.5" y2="145" stroke="#a8a278" stroke-width="1"/><line x1="576" y1="160.5" x2="648.5" y2="159" stroke="#a8a278" stroke-width="1"/><polygon points="161.0,137.6 158.5,152.1 167.5,176.6 170.5,162.1" fill="none" stroke="#a89890" stroke-width="1"/><line x1="161.0" y1="136.6" x2="161.3" y2="143.6" stroke="#a89890" stroke-width="2.2"/><polygon points="170.2,137.3 167.7,151.8 176.7,176.3 179.7,161.8" fill="none" stroke="#a89890" stroke-width="1"/><polygon points="179.4,137.0 176.9,151.5 185.9,176.0 188.9,161.5" fill="none" stroke="#a89890" stroke-width="1"/><line x1="179.4" y1="136.0" x2="179.7" y2="143.0" stroke="#a89890" stroke-width="2.2"/><polygon points="188.6,136.7 186.1,151.2 195.1,175.7 198.1,161.2" fill="none" stroke="#a89890" stroke-width="1"/><polygon points="197.8,136.4 195.3,150.9 204.3,175.4 207.3,160.9" fill="none" stroke="#a89890" stroke-width="1"/><line x1="197.8" y1="135.4" x2="198.1" y2="142.4" stroke="#a89890" stroke-width="2.2"/><polygon points="207.0,136.1 204.5,150.6 213.5,175.1 216.5,160.6" fill="none" stroke="#a89890" stroke-width="1"/><polygon points="216.2,135.8 213.7,150.3 222.7,174.8 225.7,160.3" fill="none" stroke="#a89890" stroke-width="1"/><line x1="216.2" y1="134.8" x2="216.5" y2="141.8" stroke="#a89890" stroke-width="2.2"/><polygon points="225.4,135.5 222.9,150.0 231.9,174.5 234.9,160.0" fill="none" stroke="#a89890" stroke-width="1"/><polygon points="234.6,135.2 232.1,149.7 241.1,174.2 244.1,159.7" fill="none" stroke="#a89890" stroke-width="1"/><line x1="234.6" y1="134.2" x2="234.9" y2="141.2" stroke="#a89890" stroke-width="2.2"/><polygon points="243.8,134.9 241.3,149.4 250.3,173.9 253.3,159.4" fill="none" stroke="#a89890" stroke-width="1"/><polygon points="253.0,134.6 250.5,149.1 259.5,173.6 262.5,159.1" fill="none" stroke="#a89890" stroke-width="1"/><line x1="253.0" y1="133.6" x2="253.3" y2="140.6" stroke="#a89890" stroke-width="2.2"/><polygon points="262.2,134.3 259.8,148.8 268.8,173.3 271.8,158.8" fill="none" stroke="#a89890" stroke-width="1"/><polygon points="271.5,134.0 269.0,148.5 278.0,173.0 281.0,158.5" fill="none" stroke="#a89890" stroke-width="1"/><line x1="271.5" y1="133.0" x2="271.8" y2="140.0" stroke="#a89890" stroke-width="2.2"/><polygon points="280.7,133.7 278.2,148.2 287.2,172.7 290.2,158.2" fill="none" stroke="#a89890" stroke-width="1"/><polygon points="289.9,133.4 287.4,147.9 296.4,172.4 299.4,157.9" fill="none" stroke="#a89890" stroke-width="1"/><line x1="289.9" y1="132.4" x2="290.2" y2="139.4" stroke="#a89890" stroke-width="2.2"/><polygon points="299.1,133.2 296.6,147.7 305.6,172.2 308.6,157.7" fill="none" stroke="#a89890" stroke-width="1"/><polygon points="308.3,132.9 305.8,147.4 314.8,171.9 317.8,157.4" fill="none" stroke="#a89890" stroke-width="1"/><line x1="308.3" y1="131.9" x2="308.6" y2="138.9" stroke="#a89890" stroke-width="2.2"/><polygon points="317.5,132.6 315.0,147.1 324.0,171.6 327.0,157.1" fill="none" stroke="#a89890" stroke-width="1"/><polygon points="326.7,132.3 324.2,146.8 333.2,171.3 336.2,156.8" fill="none" stroke="#a89890" stroke-width="1"/><line x1="326.7" y1="131.3" x2="327.0" y2="138.3" stroke="#a89890" stroke-width="2.2"/><polygon points="335.9,132.0 333.4,146.5 342.4,171.0 345.4,156.5" fill="none" stroke="#a89890" stroke-width="1"/><polygon points="345.1,131.7 342.6,146.2 351.6,170.7 354.6,156.2" fill="none" stroke="#a89890" stroke-width="1"/><line x1="345.1" y1="130.7" x2="345.4" y2="137.7" stroke="#a89890" stroke-width="2.2"/><polygon points="354.3,131.4 351.8,145.9 360.8,170.4 363.8,155.9" fill="none" stroke="#a89890" stroke-width="1"/><polygon points="363.5,131.1 361.0,145.6 370.0,170.1 373.0,155.6" fill="none" stroke="#a89890" stroke-width="1"/><line x1="363.5" y1="130.1" x2="363.8" y2="137.1" stroke="#a89890" stroke-width="2.2"/><polygon points="372.7,130.8 370.2,145.3 379.2,169.8 382.2,155.3" fill="none" stroke="#a89890" stroke-width="1"/><polygon points="381.9,130.5 379.4,145.0 388.4,169.5 391.4,155.0" fill="none" stroke="#a89890" stroke-width="1"/><line x1="381.9" y1="129.5" x2="382.2" y2="136.5" stroke="#a89890" stroke-width="2.2"/><polygon points="391.1,130.2 388.6,144.7 397.6,169.2 400.6,154.7" fill="none" stroke="#a89890" stroke-width="1"/><polygon points="400.3,129.9 397.8,144.4 406.8,168.9 409.8,154.4" fill="none" stroke="#a89890" stroke-width="1"/><line x1="400.3" y1="128.9" x2="400.6" y2="135.9" stroke="#a89890" stroke-width="2.2"/><polygon points="409.5,129.6 407.0,144.1 416.0,168.6 419.0,154.1" fill="none" stroke="#a89890" stroke-width="1"/><polygon points="418.7,129.3 416.2,143.8 425.2,168.3 428.2,153.8" fill="none" stroke="#a89890" stroke-width="1"/><line x1="418.7" y1="128.3" x2="419.0" y2="135.3" stroke="#a89890" stroke-width="2.2"/><polygon points="427.9,129.0 425.4,143.5 434.4,168.0 437.4,153.5" fill="none" stroke="#a89890" stroke-width="1"/><polygon points="437.1,128.7 434.6,143.2 443.6,167.7 446.6,153.2" fill="none" stroke="#a89890" stroke-width="1"/><line x1="437.1" y1="127.7" x2="437.4" y2="134.7" stroke="#a89890" stroke-width="2.2"/><polygon points="446.3,128.4 443.8,142.9 452.8,167.4 455.8,152.9" fill="none" stroke="#a89890" stroke-width="1"/><polygon points="455.5,128.1 453.0,142.6 462.0,167.1 465.0,152.6" fill="none" stroke="#a89890" stroke-width="1"/><line x1="455.5" y1="127.1" x2="455.8" y2="134.1" stroke="#a89890" stroke-width="2.2"/><polygon points="464.8,127.8 462.2,142.3 471.2,166.8 474.2,152.3" fill="none" stroke="#a89890" stroke-width="1"/><polygon points="474.0,127.6 471.5,142.1 480.5,166.6 483.5,152.1" fill="none" stroke="#a89890" stroke-width="1"/><line x1="474.0" y1="126.6" x2="474.3" y2="133.6" stroke="#a89890" stroke-width="2.2"/><polygon points="483.2,127.3 480.7,141.8 489.7,166.3 492.7,151.8" fill="none" stroke="#a89890" stroke-width="1"/><polygon points="492.4,127.0 489.9,141.5 498.9,166.0 501.9,151.5" fill="none" stroke="#a89890" stroke-width="1"/><line x1="492.4" y1="126.0" x2="492.7" y2="133.0" stroke="#a89890" stroke-width="2.2"/><polygon points="501.6,126.7 499.1,141.2 508.1,165.7 511.1,151.2" fill="none" stroke="#a89890" stroke-width="1"/><polygon points="510.8,126.4 508.3,140.9 517.3,165.4 520.3,150.9" fill="none" stroke="#a89890" stroke-width="1"/><line x1="510.8" y1="125.4" x2="511.1" y2="132.4" stroke="#a89890" stroke-width="2.2"/><polygon points="520.0,126.1 517.5,140.6 526.5,165.1 529.5,150.6" fill="none" stroke="#a89890" stroke-width="1"/><polygon points="529.2,125.8 526.7,140.3 535.7,164.8 538.7,150.3" fill="none" stroke="#a89890" stroke-width="1"/><line x1="529.2" y1="124.8" x2="529.5" y2="131.8" stroke="#a89890" stroke-width="2.2"/><polygon points="538.4,125.5 535.9,140.0 544.9,164.5 547.9,150.0" fill="none" stroke="#a89890" stroke-width="1"/><polygon points="547.6,125.2 545.1,139.7 554.1,164.2 557.1,149.7" fill="none" stroke="#a89890" stroke-width="1"/><line x1="547.6" y1="124.2" x2="547.9" y2="131.2" stroke="#a89890" stroke-width="2.2"/><polygon points="556.8,124.9 554.3,139.4 563.3,163.9 566.3,149.4" fill="none" stroke="#a89890" stroke-width="1"/><polygon points="566.0,124.6 563.5,139.1 572.5,163.6 575.5,149.1" fill="none" stroke="#a89890" stroke-width="1"/><line x1="566.0" y1="123.6" x2="566.3" y2="130.6" stroke="#a89890" stroke-width="2.2"/><line x1="161" y1="139" x2="569" y2="126" stroke="#a89890" stroke-width="1"/><line x1="161" y1="141.5" x2="569" y2="128.5" stroke="#a89890" stroke-width="1"/><line x1="161" y1="149.5" x2="569" y2="136.5" stroke="#a89890" stroke-width="1"/><line x1="161" y1="175.5" x2="569" y2="163" stroke="#a89890" stroke-width="1"/><line x1="154" y1="132.3" x2="575.6" y2="118.80000000000001" stroke="#fff" stroke-width="1.8"/><line x1="151.20000000000005" y1="151.8" x2="573" y2="139.3" stroke="#fff" stroke-width="1.8"/><line x1="164.70000000000005" y1="160.2" x2="569" y2="147.7" stroke="#fff" stroke-width="1.8"/><line x1="161" y1="178.89999999999998" x2="569.6" y2="167.2" stroke="#fff" stroke-width="1.8"/><line x1="165" y1="170" x2="569" y2="158" stroke="#ff1010" stroke-width="1.2"/><polyline points="154.0,132.3 151.2,150.9 161.0,178.9" fill="none" stroke="#fff" stroke-width="1.8"/><line x1="164.70000000000005" y1="160.2" x2="163" y2="178" stroke="#fff" stroke-width="1.5"/><polyline points="575.6,118.8 584.0,140.0 583.0,155.0 571.0,167.2" fill="none" stroke="#d8d8a0" stroke-width="1.3"/><polyline points="575.6,118.8 571.0,138.3 583.0,155.0" fill="none" stroke="#d8d8a0" stroke-width="1"/></svg>
<div style="left:437px;top:467px;width:766px;height:32px;background:#f0f0f0"></div>
<div style="left:437px;top:469px;width:99px;height:29px;background:linear-gradient(#fbfbfb,#f3f3f3);border-radius:3px;"></div>
<svg style="left:437px;top:473px" width="16" height="16"><path d="M8 1.5L14.5 6.5L12 14.5H4L1.5 6.5z" fill="none" stroke="#2a60c0" stroke-width="1.5"/></svg>
<span style="left:457px;top:476.8px;font-size:12px;line-height:12px;color:#000;font-family:'Liberation Sans',sans-serif;">顶点</span>
<svg style="left:487px;top:473px" width="17" height="17"><path d="M5 2v13h11" stroke="#2a70d0" stroke-width="1.3" fill="none" stroke-dasharray="2 1"/><path d="M5 15l8-9" stroke="#2a70d0" stroke-width="1.3"/><circle cx="2" cy="14" r="1.3" fill="none" stroke="#333"/><circle cx="8" cy="2" r="1.3" fill="none" stroke="#333"/></svg>
<span style="left:507px;top:476.8px;font-size:12px;line-height:12px;color:#000;font-family:'Liberation Sans',sans-serif;">坐标</span>
<div style="left:540px;top:469px;width:409px;height:29px;background:linear-gradient(#fbfbfb,#f3f3f3);border-radius:3px;"></div>
<div style="left:543px;top:474px;width:2px;height:2px;background:#a8a8a8"></div>
<div style="left:543px;top:478px;width:2px;height:2px;background:#a8a8a8"></div>
<div style="left:543px;top:482px;width:2px;height:2px;background:#a8a8a8"></div>
<div style="left:543px;top:486px;width:2px;height:2px;background:#a8a8a8"></div>
<div style="left:547px;top:470px;width:58px;height:27px;background:#fff"></div>
<span style="left:549px;top:476.8px;font-size:12px;line-height:12px;color:#000;font-family:'Liberation Sans',sans-serif;">不偏移</span>
<div style="left:595px;top:472px;width:10px;height:22px;background:#f0f0f0"></div>
<svg style="left:595.5px;top:480.3px" width="7" height="4"><path d="M0 0h7L3.5 4z" fill="#000"/></svg>
<div style="left:609px;top:474px;width:1px;height:18px;background:#c8c8c8"></div>
<span style="left:612px;top:477.4px;font-size:12px;line-height:12px;color:#8090a8;font-family:'Liberation Sans',sans-serif;">X=</span>
<div style="left:631px;top:471px;width:58px;height:23px;border:1px solid #8a8a8a;background:linear-gradient(#fbfbfb,#f2f2f2)"></div>
<span style="left:664px;top:476.7px;font-size:13px;line-height:13px;color:#9a8672;font-family:'Liberation Sans',sans-serif;">0</span>
<svg style="left:678px;top:474px" width="9" height="17"><path d="M1 5L4.5 1L8 5z" fill="#555"/><path d="M1 12L4.5 16L8 12z" fill="#555"/></svg>
<div style="left:735px;top:471px;width:58px;height:23px;border:1px solid #8a8a8a;background:linear-gradient(#fbfbfb,#f2f2f2)"></div>
<span style="left:768px;top:476.7px;font-size:13px;line-height:13px;color:#9a8672;font-family:'Liberation Sans',sans-serif;">0</span>
<svg style="left:782px;top:474px" width="9" height="17"><path d="M1 5L4.5 1L8 5z" fill="#555"/><path d="M1 12L4.5 16L8 12z" fill="#555"/></svg>
<span style="left:691px;top:477.6px;font-size:12px;line-height:12px;color:#8090a8;font-family:'Liberation Sans',sans-serif;">mm</span>
<span style="left:717px;top:477.4px;font-size:12px;line-height:12px;color:#8090a8;font-family:'Liberation Sans',sans-serif;">Y=</span>
<span style="left:795px;top:477.6px;font-size:12px;line-height:12px;color:#8090a8;font-family:'Liberation Sans',sans-serif;">mm</span>
<div style="left:821px;top:474px;width:1px;height:18px;background:#c8c8c8"></div>
<div style="left:824px;top:477px;width:12px;height:12px;border:1px solid #909090;background:#fff"></div>
<span style="left:844px;top:476.8px;font-size:12px;line-height:12px;color:#000;font-family:'Liberation Sans',sans-serif;">旋转</span>
<div style="left:872px;top:471px;width:68px;height:23px;border:1px solid #8a8a8a;background:linear-gradient(#fbfbfb,#f2f2f2)"></div>
<span style="left:889px;top:476.7px;font-size:13px;line-height:13px;color:#9a8672;font-family:'Liberation Sans',sans-serif;">0.000</span>
<svg style="left:929px;top:474px" width="9" height="17"><path d="M1 5L4.5 1L8 5z" fill="#555"/><path d="M1 12L4.5 16L8 12z" fill="#555"/></svg>
<span style="left:943px;top:473.5px;font-size:11px;line-height:11px;color:#6080a0;font-family:'Liberation Sans',sans-serif;">°</span>
<div style="left:74px;top:499px;width:1129px;height:28px;background:linear-gradient(#f2f2f2 0,#f2f2f2 3px,#fafafa 4px,#f7f7f7)"></div>
<svg style="left:80px;top:512px" width="95" height="12"><path d="M3 0v10M5 0l6 8V0z" fill="#c0c0c0" stroke="#c0c0c0"/><path d="M30 0l6 8V0z" fill="#c0c0c0"/><path d="M50 0l6 8H50z" fill="#2a5ad0"/><path d="M72 0l6 8H72zM80 0v10" fill="#2a5ad0" stroke="#2a5ad0" stroke-width="2"/></svg>
<div style="left:172px;top:512px;width:1px;height:11px;background:#c8c8c8"></div>
<div style="left:182px;top:512px;width:6px;height:6px;background:#c8c8c8"></div>
<svg style="left:203px;top:512px" width="10" height="6"><path d="M0 0h9L4.5 5z" fill="#2a5ad0"/></svg>
<div style="left:222px;top:512px;width:1px;height:11px;background:#c8c8c8"></div>
<span style="left:245px;top:508.5px;font-size:12px;line-height:12px;color:#9a9a9a;font-family:'Liberation Sans',sans-serif;">插入</span>
<span style="left:300px;top:508.5px;font-size:12px;line-height:12px;color:#9a9a9a;font-family:'Liberation Sans',sans-serif;">删除</span>
<svg style="left:332px;top:508px" width="14" height="14"><path d="M1 2v11M4 6v7M7 8v5M10 10v3M1 13h12" stroke="#333"/></svg>
<span style="left:350px;top:508.5px;font-size:12px;line-height:12px;color:#000;font-family:'Liberation Sans',sans-serif;">缩尺配筋</span>
<svg style="left:409px;top:506px" width="16" height="16"><rect x="4" y="3" width="11" height="11" fill="#fff" stroke="#3a6ab0"/><path d="M1 7l6-6" stroke="#333" stroke-width="1.5"/></svg>
<span style="left:427px;top:508.2px;font-size:12px;line-height:12px;color:#000;font-family:'Liberation Sans',sans-serif;">钢筋信息</span>
<svg style="left:480px;top:506px" width="17" height="15"><rect x="0.5" y="0.5" width="15" height="13" rx="1" fill="#e8eef8" stroke="#5a7ab0"/><path d="M3 4h10" stroke="#5a7ab0" stroke-width="2"/><path d="M3 10h2M6 10h2M9 10h2" stroke="#c07030"/></svg>
<span style="left:501px;top:508.2px;font-size:12px;line-height:12px;color:#000;font-family:'Liberation Sans',sans-serif;">钢筋图库</span>
<svg style="left:555px;top:505px" width="17" height="16"><rect x="0.5" y="2.5" width="10" height="12" fill="#f4f4f4" stroke="#7a8aa0"/><path d="M6 6h5V3l5 5-5 5v-3H6z" fill="#3a80d8"/></svg>
<span style="left:576px;top:508.2px;font-size:12px;line-height:12px;color:#000;font-family:'Liberation Sans',sans-serif;">其他</span>
<svg style="left:602.5px;top:511.8px" width="7" height="4"><path d="M0 0h7L3.5 4z" fill="#000"/></svg>
<span style="left:617px;top:508.2px;font-size:12px;line-height:12px;color:#000;font-family:'Liberation Sans',sans-serif;">关闭</span>
<div style="left:650px;top:505px;width:1px;height:18px;background:#c8c8c8"></div>
<span style="left:656px;top:508.2px;font-size:12px;line-height:12px;color:#000;font-family:'Liberation Sans',sans-serif;letter-spacing:0.2px">单构件钢筋总重(kg)：114.546</span>
<div style="left:74px;top:527px;width:1129px;height:171px;background:#fff"></div>
<div style="left:74px;top:527px;width:1129px;height:1px;background:#a0a0a0"></div>
<div style="left:74px;top:527px;width:1px;height:132px;background:#a0a0a0"></div>
<div style="left:75px;top:528px;width:1128px;height:19px;background:linear-gradient(#fdfdfd,#eeeeee)"></div>
<div style="left:181px;top:528px;width:56px;height:19px;background:linear-gradient(#f8d89c,#f0b860)"></div>
<div style="left:108px;top:547px;width:1095px;height:92px;background:#ccfacc"></div>
<div style="left:75px;top:547px;width:33px;height:29px;background:#f6c47e"></div>
<div style="left:75px;top:576px;width:33px;height:63px;background:linear-gradient(90deg,#f4f4f4,#ececec)"></div>
<div style="left:75px;top:639px;width:33px;height:19px;background:linear-gradient(90deg,#f4f4f4,#ececec)"></div>
<div style="left:182px;top:548px;width:55px;height:28px;background:#b6eed8"></div>
<div style="left:75px;top:547px;width:1128px;height:1px;background:#b8b8b8"></div>
<div style="left:75px;top:576px;width:1128px;height:1px;background:#b8b8b8"></div>
<div style="left:75px;top:605px;width:1128px;height:1px;background:#b8b8b8"></div>
<div style="left:75px;top:639px;width:1128px;height:1px;background:#b8b8b8"></div>
<div style="left:75px;top:658px;width:1128px;height:1px;background:#b8b8b8"></div>
<div style="left:108px;top:528px;width:1px;height:130px;background:#c0c0c0"></div>
<div style="left:181px;top:528px;width:1px;height:130px;background:#c0c0c0"></div>
<div style="left:237px;top:528px;width:1px;height:130px;background:#c0c0c0"></div>
<div style="left:273px;top:528px;width:1px;height:130px;background:#c0c0c0"></div>
<div style="left:307px;top:528px;width:1px;height:130px;background:#c0c0c0"></div>
<div style="left:507px;top:528px;width:1px;height:130px;background:#c0c0c0"></div>
<div style="left:673px;top:528px;width:1px;height:130px;background:#c0c0c0"></div>
<div style="left:829px;top:528px;width:1px;height:130px;background:#c0c0c0"></div>
<div style="left:890px;top:528px;width:1px;height:130px;background:#c0c0c0"></div>
<div style="left:928px;top:528px;width:1px;height:130px;background:#c0c0c0"></div>
<div style="left:967px;top:528px;width:1px;height:130px;background:#c0c0c0"></div>
<div style="left:1016px;top:528px;width:1px;height:130px;background:#c0c0c0"></div>
<div style="left:1077px;top:528px;width:1px;height:130px;background:#c0c0c0"></div>
<div style="left:1138px;top:528px;width:1px;height:130px;background:#c0c0c0"></div>
<div style="left:181px;top:547px;width:2px;height:111px;background:#000"></div>
<div style="left:74px;top:658px;width:1129px;height:1px;background:#a0a0a0"></div>
<span style="left:108px;width:73px;text-align:center;top:532.0px;font-size:12px;line-height:12px;color:#000;font-family:'Liberation Sans',sans-serif;">筋号</span>
<span style="left:181px;width:56px;text-align:center;top:531.5px;font-size:12px;line-height:12px;color:#7a1050">直径<span style="position:static;font-family:'Liberation Mono',monospace;font-size:10px">(mm)</span></span>
<span style="left:237px;width:36px;text-align:center;top:532.0px;font-size:12px;line-height:12px;color:#000;font-family:'Liberation Sans',sans-serif;">级别</span>
<span style="left:273px;width:34px;text-align:center;top:532.0px;font-size:12px;line-height:12px;color:#000;font-family:'Liberation Sans',sans-serif;">图号</span>
<span style="left:307px;width:200px;text-align:center;top:532.0px;font-size:12px;line-height:12px;color:#000;font-family:'Liberation Sans',sans-serif;">图形</span>
<span style="left:507px;width:166px;text-align:center;top:532.0px;font-size:12px;line-height:12px;color:#000;font-family:'Liberation Sans',sans-serif;">计算公式</span>
<span style="left:673px;width:156px;text-align:center;top:532.0px;font-size:12px;line-height:12px;color:#000;font-family:'Liberation Sans',sans-serif;">公式描述</span>
<span style="left:829px;width:61px;text-align:center;top:531.5px;font-size:12px;line-height:12px;color:#000">长度<span style="position:static;font-family:'Liberation Mono',monospace;font-size:10px">(mm)</span></span>
<span style="left:890px;width:38px;text-align:center;top:532.0px;font-size:12px;line-height:12px;color:#000;font-family:'Liberation Sans',sans-serif;">根数</span>
<span style="left:928px;width:39px;text-align:center;top:532.0px;font-size:12px;line-height:12px;color:#000;font-family:'Liberation Sans',sans-serif;">搭接</span>
<span style="left:967px;width:49px;text-align:center;top:531.5px;font-size:12px;line-height:12px;color:#000">损耗<span style="position:static;font-family:'Liberation Mono',monospace;font-size:10px">(%)</span></span>
<span style="left:1016px;width:61px;text-align:center;top:531.5px;font-size:12px;line-height:12px;color:#000">单重<span style="position:static;font-family:'Liberation Mono',monospace;font-size:10px">(kg)</span></span>
<span style="left:1077px;width:61px;text-align:center;top:531.5px;font-size:12px;line-height:12px;color:#000">总重<span style="position:static;font-family:'Liberation Mono',monospace;font-size:10px">(kg)</span></span>
<span style="left:1138px;width:65px;text-align:center;top:532.0px;font-size:12px;line-height:12px;color:#000;font-family:'Liberation Sans',sans-serif;">钢筋归类</span>
<span style="left:86px;top:557.5px;font-size:11px;line-height:11px;color:#7a1050;font-family:'Liberation Sans',sans-serif;">1*</span>
<span style="left:86px;top:586.3px;font-size:11px;line-height:11px;color:#000;font-family:'Liberation Sans',sans-serif;">2</span>
<span style="left:86px;top:617.6px;font-size:11px;line-height:11px;color:#000;font-family:'Liberation Sans',sans-serif;">3</span>
<span style="left:86px;top:644.5px;font-size:11px;line-height:11px;color:#000;font-family:'Liberation Sans',sans-serif;">4</span>
<span style="left:111px;top:556.0px;font-size:12px;line-height:12px;color:#000"><span style="position:static;font-family:'Liberation Sans',sans-serif;font-size:11px">1</span>跨<span style="position:static;font-family:'Liberation Sans',sans-serif;font-size:11px">.</span>跨中筋<span style="position:static;font-family:'Liberation Sans',sans-serif;font-size:11px">1</span></span>
<span style="left:111px;top:580.5px;font-size:12px;line-height:12px;color:#000"><span style="position:static;font-family:'Liberation Sans',sans-serif;font-size:11px">1</span>跨<span style="position:static;font-family:'Liberation Sans',sans-serif;font-size:11px">.</span>下部钢</span>
<span style="left:111px;top:591.5px;font-size:12px;line-height:12px;color:#000">筋<span style="position:static;font-family:'Liberation Sans',sans-serif;font-size:11px">1</span></span>
<span style="left:111px;top:616.5px;font-size:12px;line-height:12px;color:#000"><span style="position:static;font-family:'Liberation Sans',sans-serif;font-size:11px">1</span>跨<span style="position:static;font-family:'Liberation Sans',sans-serif;font-size:11px">.</span>箍筋<span style="position:static;font-family:'Liberation Sans',sans-serif;font-size:11px">1</span></span>
<span style="left:184px;top:557.5px;font-size:11px;line-height:11px;color:#000;font-family:'Liberation Sans',sans-serif;">18</span>
<span style="left:184px;top:586.3px;font-size:11px;line-height:11px;color:#000;font-family:'Liberation Sans',sans-serif;">20</span>
<span style="left:184px;top:617.6px;font-size:11px;line-height:11px;color:#000;font-family:'Liberation Sans',sans-serif;">8</span>
<svg style="left:249px;top:557.0px" width="11" height="10"><path d="M5.5 0v10M1.5 3.5h8v4h-8z" fill="none" stroke="#000" stroke-width="1"/><path d="M2.5 3.5V1.5M8.5 3.5V1.5" stroke="#000" stroke-width="1"/></svg>
<svg style="left:249px;top:585.8px" width="11" height="10"><path d="M5.5 0v10M1.5 3.5h8v4h-8z" fill="none" stroke="#000" stroke-width="1"/><path d="M2.5 3.5V1.5M8.5 3.5V1.5" stroke="#000" stroke-width="1"/></svg>
<svg style="left:249px;top:617.1px" width="11" height="10"><path d="M5.5 0v10M1.5 3h8v4.5h-8z" fill="none" stroke="#000" stroke-width="1"/></svg>
<span style="left:276px;top:557.5px;font-size:11px;line-height:11px;color:#000;font-family:'Liberation Sans',sans-serif;">1</span>
<span style="left:276px;top:586.3px;font-size:11px;line-height:11px;color:#000;font-family:'Liberation Sans',sans-serif;">1</span>
<span style="left:276px;top:617.6px;font-size:11px;line-height:11px;color:#000;font-family:'Liberation Sans',sans-serif;">195</span>
<div style="left:330px;top:566px;width:150px;height:2px;background:#000"></div>
<span style="left:396px;top:555.5px;font-size:11px;line-height:11px;color:#ff0000;font-family:'Liberation Sans',sans-serif;">5760</span>
<div style="left:330px;top:595px;width:150px;height:2px;background:#000"></div>
<span style="left:396px;top:584.5px;font-size:11px;line-height:11px;color:#ff0000;font-family:'Liberation Sans',sans-serif;">5900</span>
<span style="left:362px;top:620.0px;font-size:11px;line-height:11px;color:#000;font-family:'Liberation Sans',sans-serif;">460</span>
<div style="left:389px;top:613px;width:34px;height:21px;border:2px solid #000;border-radius:2px"></div>
<svg style="left:405px;top:612px" width="18" height="14"><path d="M1 6l6-4M5 11l7-6" stroke="#000" stroke-width="2"/></svg>
<span style="left:389px;top:622.5px;font-size:11px;line-height:11px;color:#ff0000;font-family:'Liberation Sans',sans-serif;">210</span>
<span style="left:510px;top:557.9px;font-size:11px;line-height:11px;color:#000;font-family:'Liberation Sans',sans-serif;letter-spacing:0.3px">35*d+4500+35*d</span>
<span style="left:510px;top:586.7px;font-size:11px;line-height:11px;color:#000;font-family:'Liberation Sans',sans-serif;letter-spacing:0.3px">35*d+4500+35*d</span>
<span style="left:510px;top:612.0px;font-size:11px;line-height:11px;color:#000;font-family:'Liberation Sans',sans-serif;letter-spacing:0.2px">2*((250-2*20)+(500-2*20))+</span>
<span style="left:510px;top:624.0px;font-size:11px;line-height:11px;color:#000;font-family:'Liberation Sans',sans-serif;letter-spacing:0.2px">2*(11.9*d)</span>
<span style="left:675px;top:556.5px;font-size:12px;line-height:12px;color:#000">设定锚固<span style="position:static;font-family:'Liberation Sans',sans-serif;font-size:11px">+</span>净长<span style="position:static;font-family:'Liberation Sans',sans-serif;font-size:11px">+</span>设定锚固</span>
<span style="left:675px;top:585.5px;font-size:12px;line-height:12px;color:#000">设定锚固<span style="position:static;font-family:'Liberation Sans',sans-serif;font-size:11px">+</span>净长<span style="position:static;font-family:'Liberation Sans',sans-serif;font-size:11px">+</span>设定锚固</span>
<span style="left:832px;top:557.5px;font-size:11px;line-height:11px;color:#000;font-family:'Liberation Sans',sans-serif;">5760</span>
<span style="left:832px;top:586.3px;font-size:11px;line-height:11px;color:#000;font-family:'Liberation Sans',sans-serif;">5900</span>
<span style="left:832px;top:617.6px;font-size:11px;line-height:11px;color:#000;font-family:'Liberation Sans',sans-serif;">1530</span>
<span style="left:893px;top:557.5px;font-size:11px;line-height:11px;color:#000;font-family:'Liberation Sans',sans-serif;">5</span>
<span style="left:893px;top:586.3px;font-size:11px;line-height:11px;color:#000;font-family:'Liberation Sans',sans-serif;">2</span>
<span style="left:893px;top:617.6px;font-size:11px;line-height:11px;color:#000;font-family:'Liberation Sans',sans-serif;">46</span>
<span style="left:931px;top:557.5px;font-size:11px;line-height:11px;color:#000;font-family:'Liberation Sans',sans-serif;">0</span>
<span style="left:931px;top:586.3px;font-size:11px;line-height:11px;color:#000;font-family:'Liberation Sans',sans-serif;">0</span>
<span style="left:931px;top:617.6px;font-size:11px;line-height:11px;color:#000;font-family:'Liberation Sans',sans-serif;">0</span>
<span style="left:970px;top:557.5px;font-size:11px;line-height:11px;color:#000;font-family:'Liberation Sans',sans-serif;">0</span>
<span style="left:970px;top:586.3px;font-size:11px;line-height:11px;color:#000;font-family:'Liberation Sans',sans-serif;">0</span>
<span style="left:970px;top:617.6px;font-size:11px;line-height:11px;color:#000;font-family:'Liberation Sans',sans-serif;">0</span>
<span style="left:1019px;top:557.5px;font-size:11px;line-height:11px;color:#000;font-family:'Liberation Sans',sans-serif;">11.52</span>
<span style="left:1019px;top:586.3px;font-size:11px;line-height:11px;color:#000;font-family:'Liberation Sans',sans-serif;">14.573</span>
<span style="left:1019px;top:617.6px;font-size:11px;line-height:11px;color:#000;font-family:'Liberation Sans',sans-serif;">0.604</span>
<span style="left:1080px;top:557.5px;font-size:11px;line-height:11px;color:#000;font-family:'Liberation Sans',sans-serif;">57.6</span>
<span style="left:1080px;top:586.3px;font-size:11px;line-height:11px;color:#000;font-family:'Liberation Sans',sans-serif;">29.146</span>
<span style="left:1080px;top:617.6px;font-size:11px;line-height:11px;color:#000;font-family:'Liberation Sans',sans-serif;">27.8</span>
<span style="left:1141px;top:556.5px;font-size:12px;line-height:12px;color:#000;font-family:'Liberation Sans',sans-serif;">直筋</span>
<span style="left:1141px;top:585.5px;font-size:12px;line-height:12px;color:#000;font-family:'Liberation Sans',sans-serif;">直筋</span>
<span style="left:1141px;top:616.5px;font-size:12px;line-height:12px;color:#7a7a7a;font-family:'Liberation Sans',sans-serif;">箍筋</span>
<div style="left:1100px;top:575px;width:110px;height:110px;background:radial-gradient(circle at 58px 47px,rgba(255,255,255,0.8) 0,rgba(255,255,255,0.55) 10px,rgba(255,255,255,0) 22px),radial-gradient(circle at 60px 58px,rgba(0,0,0,0) 14px,rgba(0,0,0,0.07) 28px,rgba(0,0,0,0.03) 40px,rgba(0,0,0,0) 50px)"></div>
<div style="left:75px;top:682px;width:1128px;height:16px;background:linear-gradient(#f4f4f4,#e4e4e4)"></div>
<svg style="left:80px;top:686px" width="6" height="9"><path d="M5 0L0 4.5L5 9z" fill="#444"/></svg>
<div style="left:94px;top:683px;width:821px;height:15px;border:1px solid #9a9a9a;border-radius:3px;background:linear-gradient(#fafafa,#e8e8e8 50%,#d8d8d8)"></div>
<svg style="left:501px;top:686px" width="8" height="8"><path d="M1 0v8M4 0v8M7 0v8" stroke="#555"/></svg>
<div style="left:80px;top:0px;width:357px;height:514px;border:1px solid #5a6470;border-top:none;border-radius:0 0 5px 5px;background:linear-gradient(90deg,#cfdeee,#eef5fc 1.2%,#d4e4f3 50%,#c6d8ec 98.3%,#adc5de)"></div>
<div style="left:80px;top:0px;width:356px;height:25px;background:linear-gradient(90deg,rgba(255,255,255,0.25),rgba(255,255,255,0) 20%,rgba(255,255,255,0.3) 45%,rgba(255,255,255,0) 70%,rgba(255,255,255,0.2)),linear-gradient(#b9c9dc,#c6d4e4 35%,#dfe9f4 65%,#e9f1f9)"></div>
<div style="left:80px;top:505px;width:356px;height:8px;background:linear-gradient(90deg,#d8eaf8,#f4faff 40%,#bcd8f0 70%,#e8f4fc)"></div>
<span style="left:89px;top:6.5px;font-size:12px;line-height:12px;color:#000;font-family:'Liberation Sans',sans-serif;text-shadow:0 0 4px #fff,0 0 2px #fff">属性编辑器</span>
<div style="left:412px;top:4px;width:19px;height:19px;border:1px solid #7a8a9c;border-radius:3px;background:linear-gradient(#eef4fa,#cfdcea)"></div>
<svg style="left:417px;top:10px" width="9" height="7"><path d="M1.5 1l6 5M7.5 1l-6 5" stroke="#4a4a4a" stroke-width="2"/></svg>
<div style="left:86px;top:25px;width:346px;height:483px;border:1px solid #3a3a3a;background:#fff"></div>
<div style="left:87px;top:26px;width:344px;height:481px;border:1px solid #f8f8f8"></div>
<div style="left:88px;top:27px;width:320px;height:24px;background:linear-gradient(#fcfcfc,#ececec)"></div>
<div style="left:231px;top:27px;width:177px;height:24px;background:linear-gradient(#f8d698,#f0bb5e)"></div>
<div style="left:88px;top:51px;width:320px;height:1px;background:#c0c0c0"></div>
<span style="left:110px;width:121px;text-align:center;top:34.5px;font-size:12px;line-height:12px;color:#000;font-family:'Liberation Sans',sans-serif;">属性名称</span>
<span style="left:231px;width:177px;text-align:center;top:34.5px;font-size:12px;line-height:12px;color:#801048;font-family:'Liberation Sans',sans-serif;">属性值</span>
<div style="left:88px;top:51px;width:22px;height:456px;background:linear-gradient(90deg,#f6f6f6,#ececec)"></div>
<div style="left:110px;top:27px;width:1px;height:480px;background:#c0c0c0"></div>
<div style="left:231px;top:27px;width:1px;height:480px;background:#c0c0c0"></div>
<div style="left:408px;top:27px;width:1px;height:480px;background:#c0c0c0"></div>
<div style="left:88px;top:70px;width:320px;height:1px;background:#c8c8c8"></div>
<span style="left:88px;width:22px;text-align:center;top:57.2px;font-size:11px;line-height:11px;color:#000;font-family:'Liberation Sans',sans-serif;">2</span>
<span style="left:131px;top:56.4px;font-size:12px;line-height:12px;color:#1010ff">类别</span>
<span style="left:234px;top:56.4px;font-size:12px;line-height:12px;color:#888">基础联系梁</span>
<div style="left:88px;top:89px;width:320px;height:1px;background:#c8c8c8"></div>
<span style="left:88px;width:22px;text-align:center;top:76.2px;font-size:11px;line-height:11px;color:#000;font-family:'Liberation Sans',sans-serif;">3</span>
<span style="left:131px;top:75.4px;font-size:12px;line-height:12px;color:#000">截面宽度<span style="position:static;font-family:'Liberation Mono',monospace;font-size:10px">(</span><span style="position:static;font-family:'Liberation Mono',monospace;font-size:10px">m</span><span style="position:static;font-family:'Liberation Mono',monospace;font-size:10px">m</span><span style="position:static;font-family:'Liberation Mono',monospace;font-size:10px">)</span></span>
<span style="left:234px;top:75.4px;font-size:12px;line-height:12px;color:#888"><span style="position:static;font-family:'Liberation Sans',sans-serif;font-size:11px">2</span><span style="position:static;font-family:'Liberation Sans',sans-serif;font-size:11px">5</span><span style="position:static;font-family:'Liberation Sans',sans-serif;font-size:11px">0</span></span>
<div style="left:88px;top:108px;width:320px;height:1px;background:#c8c8c8"></div>
<span style="left:88px;width:22px;text-align:center;top:95.2px;font-size:11px;line-height:11px;color:#000;font-family:'Liberation Sans',sans-serif;">4</span>
<span style="left:131px;top:94.4px;font-size:12px;line-height:12px;color:#000">截面高度<span style="position:static;font-family:'Liberation Mono',monospace;font-size:10px">(</span><span style="position:static;font-family:'Liberation Mono',monospace;font-size:10px">m</span><span style="position:static;font-family:'Liberation Mono',monospace;font-size:10px">m</span><span style="position:static;font-family:'Liberation Mono',monospace;font-size:10px">)</span></span>
<span style="left:234px;top:94.4px;font-size:12px;line-height:12px;color:#888"><span style="position:static;font-family:'Liberation Sans',sans-serif;font-size:11px">5</span><span style="position:static;font-family:'Liberation Sans',sans-serif;font-size:11px">0</span><span style="position:static;font-family:'Liberation Sans',sans-serif;font-size:11px">0</span></span>
<div style="left:88px;top:127px;width:320px;height:1px;background:#c8c8c8"></div>
<span style="left:88px;width:22px;text-align:center;top:114.2px;font-size:11px;line-height:11px;color:#000;font-family:'Liberation Sans',sans-serif;">5</span>
<span style="left:131px;top:113.4px;font-size:12px;line-height:12px;color:#000">轴线距梁左边线距</span>
<span style="left:234px;top:113.4px;font-size:12px;line-height:12px;color:#888"><span style="position:static;font-family:'Liberation Mono',monospace;font-size:10px">(</span><span style="position:static;font-family:'Liberation Sans',sans-serif;font-size:11px">1</span><span style="position:static;font-family:'Liberation Sans',sans-serif;font-size:11px">2</span><span style="position:static;font-family:'Liberation Sans',sans-serif;font-size:11px">5</span><span style="position:static;font-family:'Liberation Mono',monospace;font-size:10px">)</span></span>
<div style="left:88px;top:146px;width:320px;height:1px;background:#c8c8c8"></div>
<span style="left:88px;width:22px;text-align:center;top:133.2px;font-size:11px;line-height:11px;color:#000;font-family:'Liberation Sans',sans-serif;">6</span>
<span style="left:131px;top:132.4px;font-size:12px;line-height:12px;color:#000">跨数量</span>
<span style="left:234px;top:132.4px;font-size:12px;line-height:12px;color:#888"><span style="position:static;font-family:'Liberation Sans',sans-serif;font-size:11px">1</span></span>
<div style="left:88px;top:165px;width:320px;height:1px;background:#c8c8c8"></div>
<span style="left:88px;width:22px;text-align:center;top:152.2px;font-size:11px;line-height:11px;color:#000;font-family:'Liberation Sans',sans-serif;">7</span>
<span style="left:131px;top:151.4px;font-size:12px;line-height:12px;color:#1010ff">箍筋</span>
<span style="left:234px;top:151.4px;font-size:12px;line-height:12px;color:#888"><span style="position:static;font-family:'Liberation Sans',sans-serif;font-size:11px;font-weight:bold;color:#222">Φ</span><span style="position:static;font-family:'Liberation Sans',sans-serif;font-size:11px">8</span><span style="position:static;font-family:'Liberation Sans',sans-serif;font-size:11px">@</span><span style="position:static;font-family:'Liberation Sans',sans-serif;font-size:11px">1</span><span style="position:static;font-family:'Liberation Sans',sans-serif;font-size:11px">0</span><span style="position:static;font-family:'Liberation Sans',sans-serif;font-size:11px">0</span><span style="position:static;font-family:'Liberation Mono',monospace;font-size:10px">(</span><span style="position:static;font-family:'Liberation Sans',sans-serif;font-size:11px">2</span><span style="position:static;font-family:'Liberation Mono',monospace;font-size:10px">)</span></span>
<div style="left:88px;top:184px;width:320px;height:1px;background:#c8c8c8"></div>
<span style="left:88px;width:22px;text-align:center;top:171.2px;font-size:11px;line-height:11px;color:#000;font-family:'Liberation Sans',sans-serif;">8</span>
<span style="left:131px;top:170.4px;font-size:12px;line-height:12px;color:#1010ff">肢数</span>
<span style="left:234px;top:170.4px;font-size:12px;line-height:12px;color:#888"><span style="position:static;font-family:'Liberation Sans',sans-serif;font-size:11px">2</span></span>
<div style="left:88px;top:203px;width:320px;height:1px;background:#c8c8c8"></div>
<span style="left:88px;width:22px;text-align:center;top:190.2px;font-size:11px;line-height:11px;color:#000;font-family:'Liberation Sans',sans-serif;">9</span>
<span style="left:131px;top:189.4px;font-size:12px;line-height:12px;color:#1010ff">上部通长筋</span>
<span style="left:234px;top:189.4px;font-size:12px;line-height:12px;color:#888"><span style="position:static;font-family:'Liberation Sans',sans-serif;font-size:11px">2</span><span style="position:static;font-family:'Liberation Sans',sans-serif;font-size:11px;font-weight:bold;color:#222">Φ</span><span style="position:static;font-family:'Liberation Sans',sans-serif;font-size:11px">2</span><span style="position:static;font-family:'Liberation Sans',sans-serif;font-size:11px">0</span></span>
<div style="left:88px;top:222px;width:320px;height:1px;background:#c8c8c8"></div>
<span style="left:88px;width:22px;text-align:center;top:209.2px;font-size:11px;line-height:11px;color:#000;font-family:'Liberation Sans',sans-serif;">10</span>
<span style="left:131px;top:208.4px;font-size:12px;line-height:12px;color:#1010ff">下部通长筋</span>
<span style="left:234px;top:208.4px;font-size:12px;line-height:12px;color:#888"><span style="position:static;font-family:'Liberation Sans',sans-serif;font-size:11px">2</span><span style="position:static;font-family:'Liberation Sans',sans-serif;font-size:11px;font-weight:bold;color:#222">Φ</span><span style="position:static;font-family:'Liberation Sans',sans-serif;font-size:11px">2</span><span style="position:static;font-family:'Liberation Sans',sans-serif;font-size:11px">0</span></span>
<div style="left:88px;top:241px;width:320px;height:1px;background:#c8c8c8"></div>
<span style="left:88px;width:22px;text-align:center;top:228.2px;font-size:11px;line-height:11px;color:#000;font-family:'Liberation Sans',sans-serif;">11</span>
<span style="left:131px;top:227.4px;font-size:12px;line-height:12px;color:#1010ff">侧面构造或受扭筋</span>
<div style="left:88px;top:260px;width:320px;height:1px;background:#c8c8c8"></div>
<span style="left:88px;width:22px;text-align:center;top:247.2px;font-size:11px;line-height:11px;color:#000;font-family:'Liberation Sans',sans-serif;">12</span>
<span style="left:131px;top:246.4px;font-size:12px;line-height:12px;color:#1010ff">拉筋</span>
<div style="left:88px;top:279px;width:320px;height:1px;background:#c8c8c8"></div>
<span style="left:88px;width:22px;text-align:center;top:266.2px;font-size:11px;line-height:11px;color:#000;font-family:'Liberation Sans',sans-serif;">13</span>
<span style="left:131px;top:265.4px;font-size:12px;line-height:12px;color:#1010ff">其它箍筋</span>
<div style="left:88px;top:298px;width:320px;height:1px;background:#c8c8c8"></div>
<span style="left:88px;width:22px;text-align:center;top:285.2px;font-size:11px;line-height:11px;color:#000;font-family:'Liberation Sans',sans-serif;">14</span>
<span style="left:131px;top:284.4px;font-size:12px;line-height:12px;color:#000">备注</span>
<div style="left:88px;top:317px;width:320px;height:1px;background:#c8c8c8"></div>
<span style="left:88px;width:22px;text-align:center;top:304.2px;font-size:11px;line-height:11px;color:#000;font-family:'Liberation Sans',sans-serif;">15</span>
<span style="left:131px;top:303.4px;font-size:12px;line-height:12px;color:#8a8a8a">其它属性</span>
<div style="left:88px;top:336px;width:320px;height:1px;background:#c8c8c8"></div>
<span style="left:88px;width:22px;text-align:center;top:323.2px;font-size:11px;line-height:11px;color:#000;font-family:'Liberation Sans',sans-serif;">16</span>
<span style="left:141px;top:322.4px;font-size:12px;line-height:12px;color:#000">汇总信息</span>
<span style="left:234px;top:322.4px;font-size:12px;line-height:12px;color:#888">梁</span>
<div style="left:88px;top:355px;width:320px;height:1px;background:#c8c8c8"></div>
<span style="left:88px;width:22px;text-align:center;top:342.2px;font-size:11px;line-height:11px;color:#000;font-family:'Liberation Sans',sans-serif;">17</span>
<span style="left:141px;top:341.4px;font-size:12px;line-height:12px;color:#000">保护层厚度<span style="position:static;font-family:'Liberation Mono',monospace;font-size:10px">(</span><span style="position:static;font-family:'Liberation Mono',monospace;font-size:10px">m</span><span style="position:static;font-family:'Liberation Mono',monospace;font-size:10px">m</span><span style="position:static;font-family:'Liberation Mono',monospace;font-size:10px">)</span></span>
<span style="left:234px;top:341.4px;font-size:12px;line-height:12px;color:#888"><span style="position:static;font-family:'Liberation Mono',monospace;font-size:10px">(</span><span style="position:static;font-family:'Liberation Sans',sans-serif;font-size:11px">2</span><span style="position:static;font-family:'Liberation Sans',sans-serif;font-size:11px">0</span><span style="position:static;font-family:'Liberation Mono',monospace;font-size:10px">)</span></span>
<div style="left:88px;top:374px;width:320px;height:1px;background:#c8c8c8"></div>
<span style="left:88px;width:22px;text-align:center;top:361.2px;font-size:11px;line-height:11px;color:#000;font-family:'Liberation Sans',sans-serif;">18</span>
<span style="left:141px;top:360.4px;font-size:12px;line-height:12px;color:#000">扣减板<span style="position:static;font-family:'Liberation Mono',monospace;font-size:10px">/</span>筏板面</span>
<span style="left:234px;top:360.4px;font-size:12px;line-height:12px;color:#888">全部扣减</span>
<div style="left:88px;top:393px;width:320px;height:1px;background:#c8c8c8"></div>
<span style="left:88px;width:22px;text-align:center;top:380.2px;font-size:11px;line-height:11px;color:#000;font-family:'Liberation Sans',sans-serif;">19</span>
<span style="left:141px;top:379.4px;font-size:12px;line-height:12px;color:#000">扣减板<span style="position:static;font-family:'Liberation Mono',monospace;font-size:10px">/</span>筏板底</span>
<span style="left:234px;top:379.4px;font-size:12px;line-height:12px;color:#888">全部扣减</span>
<div style="left:88px;top:412px;width:320px;height:1px;background:#c8c8c8"></div>
<span style="left:88px;width:22px;text-align:center;top:399.2px;font-size:11px;line-height:11px;color:#000;font-family:'Liberation Sans',sans-serif;">20</span>
<span style="left:141px;top:398.4px;font-size:12px;line-height:12px;color:#000">计算设置</span>
<span style="left:234px;top:398.4px;font-size:12px;line-height:12px;color:#888">按默认计算设置计算</span>
<div style="left:88px;top:431px;width:320px;height:1px;background:#c8c8c8"></div>
<span style="left:88px;width:22px;text-align:center;top:418.2px;font-size:11px;line-height:11px;color:#000;font-family:'Liberation Sans',sans-serif;">21</span>
<span style="left:141px;top:417.4px;font-size:12px;line-height:12px;color:#000">节点设置</span>
<span style="left:234px;top:417.4px;font-size:12px;line-height:12px;color:#888">按默认节点设置计算</span>
<div style="left:88px;top:450px;width:320px;height:1px;background:#c8c8c8"></div>
<span style="left:88px;width:22px;text-align:center;top:437.2px;font-size:11px;line-height:11px;color:#000;font-family:'Liberation Sans',sans-serif;">22</span>
<span style="left:141px;top:436.4px;font-size:12px;line-height:12px;color:#000">搭接设置</span>
<span style="left:234px;top:436.4px;font-size:12px;line-height:12px;color:#888">按默认搭接设置计算</span>
<div style="left:88px;top:469px;width:320px;height:1px;background:#c8c8c8"></div>
<span style="left:88px;width:22px;text-align:center;top:456.2px;font-size:11px;line-height:11px;color:#000;font-family:'Liberation Sans',sans-serif;">23</span>
<span style="left:141px;top:455.4px;font-size:12px;line-height:12px;color:#000">起点顶标高<span style="position:static;font-family:'Liberation Mono',monospace;font-size:10px">(</span><span style="position:static;font-family:'Liberation Mono',monospace;font-size:10px">m</span><span style="position:static;font-family:'Liberation Mono',monospace;font-size:10px">)</span></span>
<span style="left:234px;top:455.4px;font-size:12px;line-height:12px;color:#888">层底标高<span style="position:static;font-family:'Liberation Sans',sans-serif;font-size:11px">+</span><span style="position:static;font-family:'Liberation Sans',sans-serif;font-size:11px">0</span><span style="position:static;font-family:'Liberation Sans',sans-serif;font-size:11px">.</span><span style="position:static;font-family:'Liberation Sans',sans-serif;font-size:11px">5</span><span style="position:static;font-family:'Liberation Mono',monospace;font-size:10px">(</span><span style="position:static;font-family:'Liberation Sans',sans-serif;font-size:11px">-</span><span style="position:static;font-family:'Liberation Sans',sans-serif;font-size:11px">2</span><span style="position:static;font-family:'Liberation Sans',sans-serif;font-size:11px">.</span><span style="position:static;font-family:'Liberation Sans',sans-serif;font-size:11px">5</span><span style="position:static;font-family:'Liberation Sans',sans-serif;font-size:11px">5</span><span style="position:static;font-family:'Liberation Mono',monospace;font-size:10px">)</span></span>
<div style="left:88px;top:488px;width:320px;height:1px;background:#c8c8c8"></div>
<span style="left:88px;width:22px;text-align:center;top:475.2px;font-size:11px;line-height:11px;color:#000;font-family:'Liberation Sans',sans-serif;">24</span>
<span style="left:141px;top:474.4px;font-size:12px;line-height:12px;color:#000">终点顶标高<span style="position:static;font-family:'Liberation Mono',monospace;font-size:10px">(</span><span style="position:static;font-family:'Liberation Mono',monospace;font-size:10px">m</span><span style="position:static;font-family:'Liberation Mono',monospace;font-size:10px">)</span></span>
<span style="left:234px;top:474.4px;font-size:12px;line-height:12px;color:#888">层底标高<span style="position:static;font-family:'Liberation Sans',sans-serif;font-size:11px">+</span><span style="position:static;font-family:'Liberation Sans',sans-serif;font-size:11px">0</span><span style="position:static;font-family:'Liberation Sans',sans-serif;font-size:11px">.</span><span style="position:static;font-family:'Liberation Sans',sans-serif;font-size:11px">5</span><span style="position:static;font-family:'Liberation Mono',monospace;font-size:10px">(</span><span style="position:static;font-family:'Liberation Sans',sans-serif;font-size:11px">-</span><span style="position:static;font-family:'Liberation Sans',sans-serif;font-size:11px">2</span><span style="position:static;font-family:'Liberation Sans',sans-serif;font-size:11px">.</span><span style="position:static;font-family:'Liberation Sans',sans-serif;font-size:11px">5</span><span style="position:static;font-family:'Liberation Sans',sans-serif;font-size:11px">5</span><span style="position:static;font-family:'Liberation Mono',monospace;font-size:10px">)</span></span>
<div style="left:88px;top:507px;width:320px;height:1px;background:#c8c8c8"></div>
<span style="left:88px;width:22px;text-align:center;top:494.2px;font-size:11px;line-height:11px;color:#000;font-family:'Liberation Sans',sans-serif;">25</span>
<span style="left:131px;top:493.4px;font-size:12px;line-height:12px;color:#8a8a8a">锚固搭接</span>
<div style="left:113px;top:302px;width:11px;height:11px;border:1px solid #a0a0a0;background:linear-gradient(#fff,#dde)"></div>
<svg style="left:115px;top:304px" width="7" height="7"><path d="M0 3.5h7" stroke="#000" stroke-width="1.3"/></svg>
<div style="left:113px;top:492px;width:11px;height:11px;border:1px solid #a0a0a0;background:linear-gradient(#fff,#dde)"></div>
<svg style="left:115px;top:494px" width="7" height="7"><path d="M0 3.5h7M3.5 0v7" stroke="#000" stroke-width="1.3"/></svg>
<div style="left:119px;top:313px;width:1px;height:165px;background:#a0a0a0"></div>
<div style="left:120px;top:327px;width:17px;height:1px;background:#a0a0a0"></div>
<div style="left:120px;top:346px;width:17px;height:1px;background:#a0a0a0"></div>
<div style="left:120px;top:365px;width:17px;height:1px;background:#a0a0a0"></div>
<div style="left:120px;top:384px;width:17px;height:1px;background:#a0a0a0"></div>
<div style="left:120px;top:403px;width:17px;height:1px;background:#a0a0a0"></div>
<div style="left:120px;top:422px;width:17px;height:1px;background:#a0a0a0"></div>
<div style="left:120px;top:441px;width:17px;height:1px;background:#a0a0a0"></div>
<div style="left:120px;top:460px;width:17px;height:1px;background:#a0a0a0"></div>
<div style="left:120px;top:479px;width:17px;height:1px;background:#a0a0a0"></div>
<div style="left:409px;top:27px;width:19px;height:480px;background:linear-gradient(90deg,#e6e6e6,#f0f0f0 30%,#ececec 70%,#f4f4f4)"></div>
<svg style="left:415px;top:35px" width="9" height="5"><path d="M0 5L4.5 0.5L9 5z" fill="#404040"/></svg>
<svg style="left:415px;top:494px" width="9" height="5"><path d="M0 0L4.5 4.5L9 0z" fill="#606060"/></svg>
<div style="left:410px;top:119px;width:17px;height:218px;border:1px solid #a8a8a8;border-radius:2px;background:linear-gradient(90deg,#e8e8e8,#f4f4f4 40%,#dedede)"></div>
<svg style="left:414px;top:224px" width="8" height="8"><path d="M0 1h8M0 4h8M0 7h8" stroke="#333"/></svg>
<span style="left:224px;top:251px;font-size:24px;line-height:24px;color:rgba(255,0,0,0.85);font-family:'Liberation Serif',serif">用基础联系梁定义</span>
<span style="left:224px;top:275.5px;font-size:24px;line-height:24px;color:rgba(255,0,0,0.85);font-family:'Liberation Serif',serif">按照软件默认设置</span>
<svg style="left:0;top:0" width="1203" height="698"><ellipse cx="691.5" cy="576.6" rx="38.6" ry="44.6" fill="none" stroke="#ff0000" stroke-width="2.8"/><ellipse cx="789.1" cy="571.5" rx="29.7" ry="46.6" fill="none" stroke="#ff0000" stroke-width="2.8"/></svg>
</body></html>
